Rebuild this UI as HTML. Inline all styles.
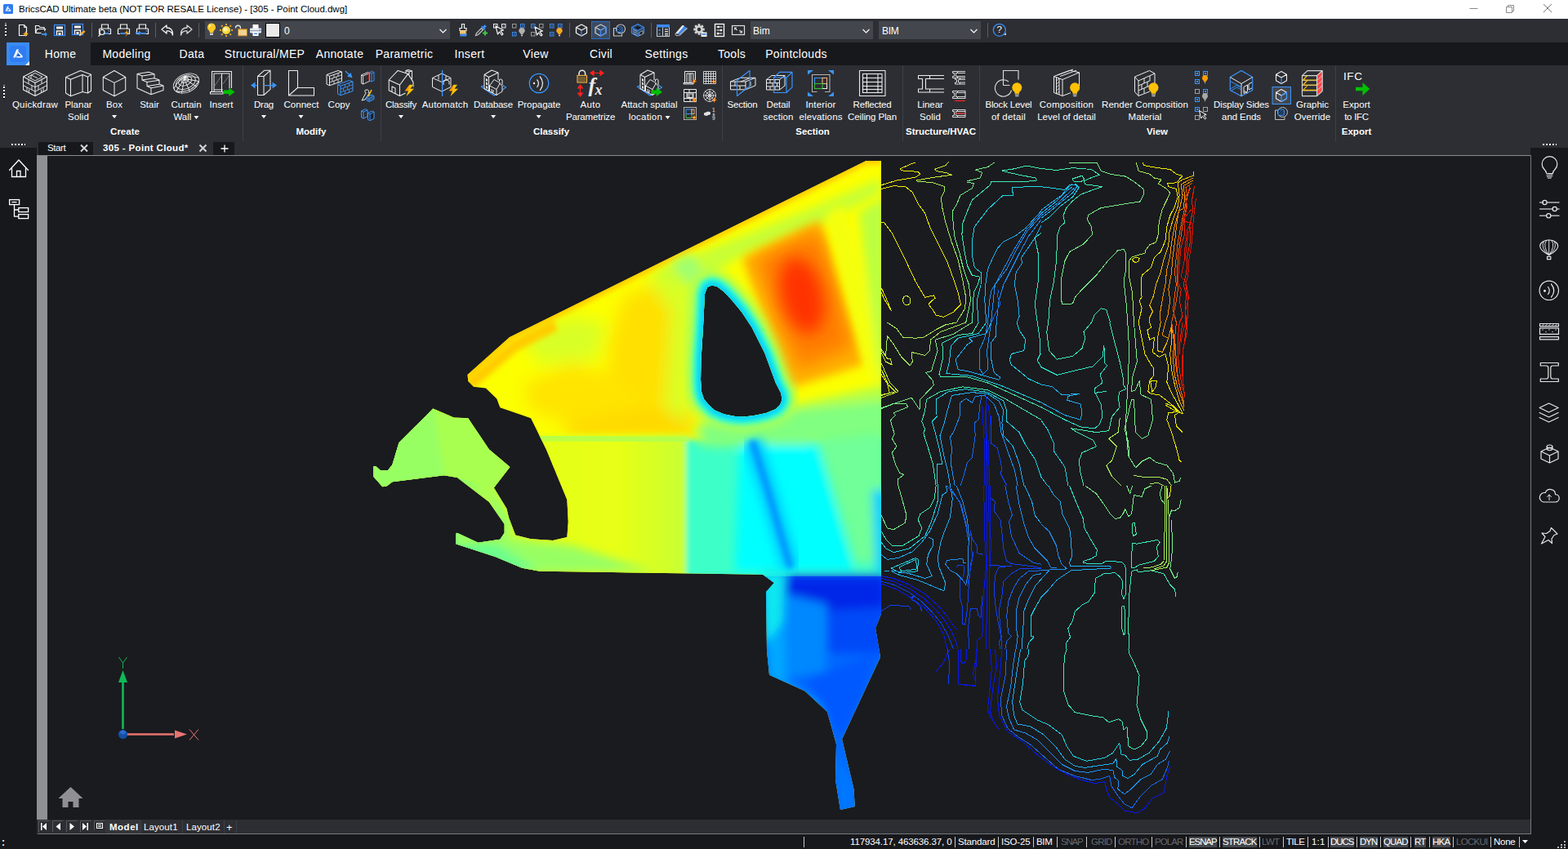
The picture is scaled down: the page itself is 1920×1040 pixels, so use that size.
<!DOCTYPE html>
<html lang="en"><head><meta charset="utf-8"><title>BricsCAD Ultimate beta - 305 - Point Cloud.dwg</title>
<style>
*{box-sizing:border-box;margin:0;padding:0}
html,body{width:1920px;height:1040px;overflow:hidden;background:#2c2e33;font-family:"Liberation Sans",sans-serif;color:#fff}
.abs{position:absolute}
#title{position:absolute;left:0;top:0;width:1920px;height:23px;background:#fff;color:#000;font-size:12px}
#title .t{position:absolute;left:23px;top:5px;white-space:nowrap;font-size:11.5px;letter-spacing:-0.03px}
#toolbar{position:absolute;left:0;top:23px;width:1920px;height:29px;background:#2c2e33}
#tabs{position:absolute;left:0;top:52px;width:1920px;height:28px;background:#2c2e33}
#tabs .dark{position:absolute;left:111px;top:0;width:1809px;height:28px;background:#17181c}
#tabs .tab{position:absolute;top:0;height:28px;line-height:29px;font-size:14px;letter-spacing:0.3px;color:#fff;white-space:nowrap;transform:translateX(-50%)}
#ribbon{position:absolute;left:0;top:80px;width:1920px;height:94px;background:#2c2e33}
.rl{position:absolute;font-size:11.5px;line-height:15px;color:#fff;text-align:center;white-space:nowrap;transform:translateX(-50%)}
.gl{position:absolute;top:75px;font-size:11.5px;font-weight:bold;color:#fff;white-space:nowrap;transform:translateX(-50%)}
.sep{position:absolute;top:0;width:1px;height:93px;background:#3d4046}
.dd{display:inline-block;width:0;height:0;border-left:3.7px solid transparent;border-right:3.7px solid transparent;border-top:4px solid #fff;vertical-align:middle}
svg{position:absolute;overflow:visible}
#doctabs{position:absolute;left:0;top:174px;width:1920px;height:16px;background:#2c2e33}
#left{position:absolute;left:0;top:181px;width:45px;height:841px;background:#17181c}
#right{position:absolute;left:1874px;top:181px;width:46px;height:841px;background:#17181c}
#vp{position:absolute;left:45px;top:190px;width:1829px;height:814px;background:#1a1b1f;border-top:1px solid #8a8a8e;border-left:1px solid #8a8a8e}
#layouts{position:absolute;left:46px;top:1003px;width:1828px;height:20px;background:#2c2e33}
#status{position:absolute;left:0;top:1022px;width:1920px;height:18px;background:#17181c;font-size:11.5px}

</style></head>
<body>
<div id="title">
<svg style="left:4px;top:5px" width="12" height="12" viewBox="4 4 20 20"><rect x="4" y="4" width="20" height="20" rx="2.500" fill="#2f7df2"/><path d="M12.300 8.500h2.700L10.900 18.600H8.200z" fill="#fff"/><path d="M14 10.800l5.800 6-0.600 1.800H12z" fill="#fff"/><path d="M14.200 13.600l2.800 3.200h-4.100z" fill="#1d63c4"/></svg>
<span class="t">BricsCAD Ultimate beta (NOT FOR RESALE License) - [305 - Point Cloud.dwg]</span>
<svg style="left:1790px;top:0" width="130" height="23" viewBox="0 0 130 23"><g stroke="#8a8a8a" stroke-width="1" fill="none"><path d="M9.5 10.5h10"/><path d="M54.5 8.5h7v7h-7z"/><path d="M56.5 8.5v-2h7v7h-2"/><path d="M100 5l10 10M110 5l-10 10" stroke="#777"/></g></svg>
</div>

<div id="toolbar">
<svg style="left:0;top:0" width="1920" height="29" viewBox="0 0 1920 29">
<g fill="#fff"><rect x="6" y="5" width="2" height="1" fill="#aaa"/><rect x="6" y="7" width="2" height="2"/><rect x="6" y="9" width="2" height="1" fill="#000"/><rect x="6" y="11" width="2" height="2"/><rect x="6" y="13" width="2" height="1" fill="#000"/><rect x="6" y="15" width="2" height="2"/><rect x="6" y="17" width="2" height="1" fill="#000"/><rect x="6" y="19" width="2" height="2"/><rect x="6" y="21" width="2" height="1" fill="#000"/></g>
<g transform="translate(20 6)"><path d="M3.500 1.500h6l3 3v10h-9z" fill="none" stroke="#f2f2f2" stroke-width="1.200"/><path d="M9.500 1.500v3h3" fill="none" stroke="#f2f2f2" stroke-width="1"/><path d="M11.500 9l1.200 2.300 2.300 1.200-2.300 1.200-1.200 2.300-1.200-2.300-2.300-1.200 2.300-1.200z" fill="#f5a623"/></g>
<g transform="translate(42 6)"><path d="M1.500 11.500v-9h4l1.500 2h5v2" fill="none" stroke="#f2f2f2" stroke-width="1.200"/><path d="M1.500 11.500l2-5h10l-1 2.500" fill="none" stroke="#f2f2f2" stroke-width="1.200"/><path d="M1.500 11.500h7" stroke="#f2f2f2" stroke-width="1.200"/><path d="M9 12h4v-2l3 3-3 3v-2H9z" fill="#3a8bf5"/></g>
<g transform="translate(65 6)"><rect x="1.500" y="1.500" width="13" height="13" fill="none" stroke="#3a8bf5" stroke-width="1.300"/><rect x="4" y="3.500" width="8" height="3" fill="#f2f2f2"/><path d="M4.500 14v-5h7v5" fill="none" stroke="#f2f2f2" stroke-width="1.400"/><rect x="6.500" y="11" width="3" height="3" fill="#f2f2f2"/></g>
<g transform="translate(87 5)"><rect x="1.500" y="1.500" width="13" height="13" fill="none" stroke="#3a8bf5" stroke-width="1.300"/><rect x="4" y="3.500" width="8" height="3" fill="#f2f2f2"/><path d="M4.500 14v-5h7v5" fill="none" stroke="#f2f2f2" stroke-width="1.400"/><rect x="6.500" y="11" width="3" height="3" fill="#f2f2f2"/><path d="M10 16l1-3 5-4 1.500 2-5 4z" fill="#f5a623"/><path d="M10 16l1-3 1.500 2z" fill="#fff"/></g>
<g transform="translate(120 6)"><path d="M4.500 6.500v-5.500h8v5.500" fill="none" stroke="#f2f2f2" stroke-width="1.200"/><path d="M4 12.500H1.500v-5.500q0-1 1-1h12q1 0 1 1v5.500H13" fill="none" stroke="#f2f2f2" stroke-width="1.200"/><rect x="7" y="11" width="6" height="2" fill="#3a8bf5"/><circle cx="5" cy="10.500" r="3" fill="#2c2e33" stroke="#f2f2f2" stroke-width="1.200"/><path d="M3 13l-2.500 2.500" stroke="#f2f2f2" stroke-width="1.200"/><rect x="12.500" y="8" width="1.500" height="1.500" fill="#3a8bf5"/></g>
<g transform="translate(143 6)"><path d="M4.500 6.500v-5.500h8v5.500" fill="none" stroke="#f2f2f2" stroke-width="1.200"/><path d="M4 12.500H1.500v-5.500q0-1 1-1h12q1 0 1 1v5.500H13" fill="none" stroke="#f2f2f2" stroke-width="1.200"/><rect x="4.500" y="11" width="6" height="2" fill="#3a8bf5"/><path d="M13 7.500l-3.500 4.500h2.500l-1.500 4 4.500-5.500h-2.500z" fill="#f5a623"/></g>
<g transform="translate(166 6)"><path d="M4.500 6.500v-5.500h8v5.500" fill="none" stroke="#f2f2f2" stroke-width="1.200"/><path d="M4 12.500H1.500v-5.500q0-1 1-1h12q1 0 1 1v5.500H13" fill="none" stroke="#f2f2f2" stroke-width="1.200"/><rect x="7" y="11" width="6" height="2" fill="#3a8bf5"/><path d="M0 10.500h4v-2l3.500 3-3.500 3v-2H0z" fill="#3a8bf5"/><rect x="12.500" y="8" width="1.500" height="1.500" fill="#3a8bf5"/></g>
<g transform="translate(197 6)"><path d="M1 7l6-5v3q8 0 7.500 9-1.500-5.500-7.500-5v3z" fill="none" stroke="#f2f2f2" stroke-width="1.300" stroke-linejoin="round"/></g>
<g transform="translate(220 6)"><path d="M15 7l-6-5v3q-8 0-7.500 9 1.500-5.500 7.500-5v3z" fill="none" stroke="#d8d8d8" stroke-width="1.300" stroke-linejoin="round"/></g>
<rect x="112" y="5" width="1" height="18" fill="#5a5d63"/>
<rect x="190" y="5" width="1" height="18" fill="#5a5d63"/>
<rect x="243" y="5" width="1" height="18" fill="#5a5d63"/>
<rect x="697" y="5" width="1" height="18" fill="#5a5d63"/>
<rect x="797" y="5" width="1" height="18" fill="#5a5d63"/>
<rect x="1209" y="5" width="1" height="18" fill="#5a5d63"/>
<rect x="251" y="3" width="300" height="22" fill="#43464c"/>
<g transform="translate(251 5)"><path d="M8 0.500a5 5 0 0 1 3 9q-0.800 0.800-0.800 2.500h-4.400q0-1.700-0.800-2.500a5 5 0 0 1 3-9z" fill="#ffc928"/><path d="M7 2.500a2.500 2.500 0 0 0-1.500 3" stroke="#fff" stroke-width="1.200" fill="none"/><rect x="6" y="12.500" width="4" height="2.500" fill="#c8c8c8"/></g>
<g transform="translate(269 6)"><circle cx="8" cy="8" r="5" fill="#ffdc3c"/><circle cx="7" cy="7" r="2.500" fill="#fff2a0"/><g fill="#f5a623"><rect x="7" y="0" width="2" height="2"/><rect x="7" y="14" width="2" height="2"/><rect x="0" y="7" width="2" height="2"/><rect x="14" y="7" width="2" height="2"/><rect x="1.800" y="1.800" width="2" height="2"/><rect x="12.200" y="1.800" width="2" height="2"/><rect x="1.800" y="12.200" width="2" height="2"/><rect x="12.200" y="12.200" width="2" height="2"/></g></g>
<g transform="translate(287 6)"><path d="M1.500 5.500a3 3 0 0 1 6-0.500v2" fill="none" stroke="#e0e0e0" stroke-width="1.300"/><rect x="4.500" y="6.500" width="11" height="8.500" fill="#e8b860" stroke="#b07820" stroke-width="0.800"/><path d="M5 9h10M5 11h10M5 13h10" stroke="#fff4d8" stroke-width="0.900"/></g>
<g transform="translate(305 6)"><rect x="4.500" y="1" width="7" height="5" fill="#fff"/><rect x="1" y="5.500" width="14" height="6" rx="1" fill="#e4e8ee"/><rect x="1" y="8" width="14" height="1.200" fill="#9aa4b4"/><rect x="4.500" y="10" width="7" height="5" fill="#fff"/><rect x="6" y="11.500" width="4" height="1.500" fill="#3a8bf5"/><rect x="12.500" y="7" width="1.500" height="1.500" fill="#3a8bf5"/></g>
<rect x="325.500" y="5.500" width="17" height="17" fill="#e9e9e9" stroke="#000" stroke-width="1"/>
<path d="M538.5 13l4 4 4-4" fill="none" stroke="#fff" stroke-width="1.100"/>
<g transform="translate(559 6)"><path d="M6.500 0.500h3v5h2.500v3h-8v-3h2.500z" fill="none" stroke="#f2f2f2" stroke-width="1.200"/><path d="M4 8.500h8v4.500h-8z" fill="#f5a623"/><path d="M5.500 9v3M7.500 9v3M9.500 9v3" stroke="#fff" stroke-width="0.700"/><path d="M-1 15.500h5l1-3h8l-1 3z" fill="#3a8bf5"/></g>
<g transform="translate(581 6)"><path d="M1.500 14.500l1-3 6-6 2 2-6 6z" fill="none" stroke="#c8c8c8" stroke-width="1.200"/><path d="M8 4l1.500-1.500 1 1 2-2.500 2.500 2.500-2.500 2 1 1L12 8z" fill="#3a8bf5"/><path d="M10 11.500h6M13 8.500v6" stroke="#3fc83f" stroke-width="2"/></g>
<g transform="translate(604 6)"><rect x="0.5" y="0.5" width="4.500" height="4.500" fill="none" stroke="#f2f2f2" stroke-width="1"/><rect x="2.0" y="2.0" width="1.500" height="1.500" fill="#3a8bf5"/><rect x="10.5" y="0.5" width="4.500" height="4.500" fill="none" stroke="#f2f2f2" stroke-width="1"/><rect x="12.0" y="2.0" width="1.500" height="1.500" fill="#3a8bf5"/><path d="M3 3l2.500 10 2-3 3 4 1.500-1.200-3-4 3.500-0.800z" fill="#2c2e33" stroke="#fff" stroke-width="1.100" stroke-linejoin="round"/></g>
<g transform="translate(627 6)"><rect x="0.5" y="0.5" width="4.500" height="4.500" fill="none" stroke="#9a9a9a" stroke-width="1"/><rect x="10.5" y="0.5" width="4.500" height="4.500" fill="none" stroke="#3a8bf5" stroke-width="1"/><rect x="12.0" y="2.0" width="1.500" height="1.500" fill="#3a8bf5"/><rect x="0.5" y="10.5" width="4.500" height="4.500" fill="none" stroke="#3a8bf5" stroke-width="1"/><rect x="2.0" y="12.0" width="1.500" height="1.500" fill="#3a8bf5"/><path d="M12 5a3.500 3.500 0 0 1 2 6.500q-0.500 0.500-0.500 1.500h-3q0-1-0.500-1.500a3.500 3.500 0 0 1 2-6.500z" fill="#b0b0b0"/><rect x="11" y="13.5" width="2" height="1.800" fill="#c8c8c8"/></g>
<g transform="translate(650 6)"><rect x="0.5" y="0.5" width="4.500" height="4.500" fill="none" stroke="#3a8bf5" stroke-width="1"/><rect x="2.0" y="2.0" width="1.500" height="1.500" fill="#3a8bf5"/><rect x="10.5" y="0.5" width="4.500" height="4.500" fill="none" stroke="#9a9a9a" stroke-width="1"/><rect x="0.5" y="10.5" width="4.500" height="4.500" fill="none" stroke="#9a9a9a" stroke-width="1"/><path d="M5 4l2.500 10 2-3 3 4 1.500-1.200-3-4 3.500-0.800z" fill="#2c2e33" stroke="#fff" stroke-width="1.100" stroke-linejoin="round"/></g>
<g transform="translate(673 6)"><rect x="0.5" y="0.5" width="4.500" height="4.500" fill="none" stroke="#3a8bf5" stroke-width="1"/><rect x="2.0" y="2.0" width="1.500" height="1.500" fill="#3a8bf5"/><rect x="10.5" y="0.5" width="4.500" height="4.500" fill="none" stroke="#3a8bf5" stroke-width="1"/><rect x="12.0" y="2.0" width="1.500" height="1.500" fill="#3a8bf5"/><rect x="0.5" y="10.5" width="4.500" height="4.500" fill="none" stroke="#3a8bf5" stroke-width="1"/><rect x="2.0" y="12.0" width="1.500" height="1.500" fill="#3a8bf5"/><path d="M12 5a3.500 3.500 0 0 1 2 6.500q-0.500 0.500-0.500 1.500h-3q0-1-0.500-1.500a3.500 3.500 0 0 1 2-6.500z" fill="#f5a623"/><rect x="11" y="13.5" width="2" height="1.800" fill="#c8c8c8"/></g>
<g transform="translate(704 6)"><path d="M8 1l6.500 3.500v7L8 15 1.500 11.500v-7z" fill="none" stroke="#f2f2f2" stroke-width="1.300" stroke-linejoin="round"/><path d="M1.500 4.500L8 8l6.500-3.500" fill="none" stroke="#f2f2f2" stroke-width="1.300" stroke-linejoin="round"/><path d="M8 8v7" stroke="#3a8bf5" stroke-width="1.300"/></g>
<rect x="724.500" y="3.500" width="22" height="21" fill="#3a4a60" stroke="#2f6ec8" stroke-width="1"/>
<g transform="translate(727.5 6)"><path d="M8 1l6.500 3.500v7L8 15 1.500 11.500v-7z" fill="none" stroke="#c8c8c8" stroke-width="1.300" stroke-linejoin="round"/><path d="M1.500 4.500L8 8l6.500-3.500" fill="none" stroke="#c8c8c8" stroke-width="1.300"/><path d="M8 8v7l6.500-3.500v-7z" fill="none" stroke="#3a8bf5" stroke-width="1.300" stroke-linejoin="round"/></g>
<g transform="translate(750 6)"><path d="M4 5.500H1.500v9.500h10v-2" fill="none" stroke="#c8c8c8" stroke-width="1.200"/><circle cx="10" cy="6.500" r="5.500" fill="none" stroke="#c8c8c8" stroke-width="1.100"/><rect x="5.500" y="4" width="6.500" height="6.500" rx="1.500" fill="#18191c" stroke="#3a8bf5" stroke-width="1"/><path d="M6.500 8l3.500-3.500M7 10l4.500-4.500M9 10.500l3-3" stroke="#3a8bf5" stroke-width="0.900"/></g>
<g transform="translate(773 6)"><path d="M8 0.500l7.500 4v7L8 15.500 0.500 11.500v-7z" fill="#2a4468" stroke="#3a8bf5" stroke-width="1.100" stroke-linejoin="round"/><path d="M0.500 4.500L8 8.500l7.500-4M8 8.500v7" fill="none" stroke="#3a8bf5" stroke-width="1"/><path d="M2 7l5 2.500M2 9.500l5 2.500M2 12l5 2.500" stroke="#c8c8c8" stroke-width="0.800"/><path d="M10 10.500l4-2v4l-4 2z" fill="#18191c" stroke="#c8c8c8" stroke-width="0.700"/><path d="M8 3l4 2-4 2-4-2z" fill="#18191c"/></g>
<g transform="translate(804 6)"><rect x="0.500" y="1.500" width="15" height="14" fill="none" stroke="#c8c8c8" stroke-width="1"/><rect x="0" y="1" width="16" height="3.500" fill="#3a8bf5"/><path d="M7.500 4.500v11" stroke="#c8c8c8" stroke-width="1"/><rect x="2.500" y="7" width="2" height="2" fill="#3a8bf5"/><rect x="2.500" y="11.500" width="2" height="2" fill="#3a8bf5"/><path d="M10 7h4M10 9.500h4M10 12h4M10 14h4" stroke="#fff" stroke-width="1"/></g>
<g transform="translate(826 6)"><path d="M1 12l8-9.500q2-1 3 0.500l-8 9.500z" fill="#e8e8e8"/><path d="M4 12.500l8-9.500 3.500 2.500-9 8.500z" fill="#3a8bf5"/><path d="M1 12q0 3 3 2.500l2.500-0.500 9-8.500" fill="none" stroke="#b0b0b0" stroke-width="1.200"/></g>
<g transform="translate(849 6)"><g transform="translate(7 7)" fill="#d0d0d0"><rect x="-1.400" y="-6.800" width="2.800" height="3.200" transform="rotate(0)" /><rect x="-1.400" y="-6.800" width="2.800" height="3.200" transform="rotate(45)" /><rect x="-1.400" y="-6.800" width="2.800" height="3.200" transform="rotate(90)" /><rect x="-1.400" y="-6.800" width="2.800" height="3.200" transform="rotate(135)" /><rect x="-1.400" y="-6.800" width="2.800" height="3.200" transform="rotate(180)" /><rect x="-1.400" y="-6.800" width="2.800" height="3.200" transform="rotate(225)" /><rect x="-1.400" y="-6.800" width="2.800" height="3.200" transform="rotate(270)" /><rect x="-1.400" y="-6.800" width="2.800" height="3.200" transform="rotate(315)" /><circle r="4.800"/></g><circle cx="7" cy="7" r="2.200" fill="#2c2e33"/><rect x="9.500" y="10.500" width="7" height="5.500" fill="#f0f0f0"/><rect x="10.500" y="12" width="5" height="1.800" fill="#3a8bf5"/></g>
<g transform="translate(873 6)"><rect x="2.500" y="0.500" width="11" height="15" fill="none" stroke="#fff" stroke-width="1.300"/><path d="M4.500 4h7M4.500 8h7M4.500 12h7" stroke="#fff" stroke-width="1"/><rect x="5.500" y="2.800" width="2" height="2.400" fill="#fff"/><rect x="9" y="6.800" width="2" height="2.400" fill="#fff"/><rect x="5" y="10.800" width="2" height="2.400" fill="#fff"/></g>
<g transform="translate(896 6)"><rect x="0.500" y="2.500" width="15" height="11" fill="none" stroke="#e0e0e0" stroke-width="1.200"/><path d="M3 4.500h3.500l-1.200 1.200 1.700 1.700-1 1-1.700-1.700L3 8z" fill="#d0d0d0"/><path d="M13 11.500h-3.500l1.200-1.200-1.700-1.700 1-1 1.700 1.700L13 8z" fill="#d0d0d0"/></g>
<rect x="919" y="3" width="150" height="22" fill="#43464c"/>
<path d="M1056.5 13l4 4 4-4" fill="none" stroke="#fff" stroke-width="1.100"/>
<rect x="1076" y="3" width="125" height="22" fill="#43464c"/>
<path d="M1188.5 13l4 4 4-4" fill="none" stroke="#fff" stroke-width="1.100"/>
<circle cx="1223.800" cy="13.800" r="7.500" fill="none" stroke="#3a8bf5" stroke-width="1.300"/><path d="M1232 17v3h-3z" fill="#d0d0d0"/>
</svg>
<div class="abs" style="left:348px;top:8px;font-size:12px;color:#fff">0</div>
<div class="abs" style="left:922px;top:8px;font-size:12px;color:#fff">Bim</div>
<div class="abs" style="left:1080px;top:8px;font-size:12px;color:#fff;letter-spacing:-0.3px">BIM</div>
<div class="abs" style="left:1220.500px;top:7px;font-size:11.500px;color:#fff">?</div>
</div>

<div id="tabs"><div class="dark"></div>
<div class="abs" style="left:8px;top:0;width:28px;height:28px;background:#3a8bf5"></div>
<svg style="left:8px;top:0" width="28" height="28" viewBox="0 0 28 28"><rect x="4" y="4" width="20" height="20" rx="3.500" fill="#2f7df2"/><path d="M12.300 8.500h2.700L10.900 18.600H8.200z" fill="#fff"/><path d="M14 10.800l5.800 6-0.600 1.800H12z" fill="#fff"/><path d="M14 12.800l3.600 4.100h-5z" fill="#1d63c4"/><path d="M28 23v5h-5z" fill="#fff"/></svg>
<div class="tab" style="left:74px">Home</div>
<div class="tab" style="left:155px">Modeling</div>
<div class="tab" style="left:235px">Data</div>
<div class="tab" style="left:324px">Structural/MEP</div>
<div class="tab" style="left:416px">Annotate</div>
<div class="tab" style="left:495px">Parametric</div>
<div class="tab" style="left:575px">Insert</div>
<div class="tab" style="left:656px">View</div>
<div class="tab" style="left:736px">Civil</div>
<div class="tab" style="left:816px">Settings</div>
<div class="tab" style="left:896px">Tools</div>
<div class="tab" style="left:975px">Pointclouds</div>
</div>
<div id="ribbon">
<div class="rl" style="left:43px;top:41px"><span style="letter-spacing:0.19px">Quickdraw</span></div>
<div class="rl" style="left:96px;top:41px">Planar<br><span style="letter-spacing:0.07px">Solid</span></div>
<div class="rl" style="left:140px;top:41px">Box<br><span class="dd" style="position:relative;top:-1px"></span></div>
<div class="rl" style="left:183px;top:41px">Stair</div>
<div class="rl" style="left:228px;top:41px">Curtain<br>Wall <span class="dd"></span></div>
<div class="rl" style="left:271px;top:41px">Insert</div>
<div class="rl" style="left:323px;top:41px"><span style="letter-spacing:-0.23px">Drag</span><br><span class="dd" style="position:relative;top:-1px"></span></div>
<div class="rl" style="left:369px;top:41px"><span style="letter-spacing:0.02px">Connect</span><br><span class="dd" style="position:relative;top:-1px"></span></div>
<div class="rl" style="left:415px;top:41px">Copy</div>
<div class="rl" style="left:491px;top:41px"><span style="letter-spacing:-0.28px">Classify</span><br><span class="dd" style="position:relative;top:-1px"></span></div>
<div class="rl" style="left:545px;top:41px"><span style="letter-spacing:0.18px">Automatch</span></div>
<div class="rl" style="left:604px;top:41px"><span style="letter-spacing:-0.18px">Database</span><br><span class="dd" style="position:relative;top:-1px"></span></div>
<div class="rl" style="left:660px;top:41px"><span style="letter-spacing:-0.04px">Propagate</span><br><span class="dd" style="position:relative;top:-1px"></span></div>
<div class="rl" style="left:723px;top:41px"><span style="letter-spacing:0.29px">Auto</span><br><span style="letter-spacing:-0.16px">Parametrize</span></div>
<div class="rl" style="left:795px;top:41px"><span style="letter-spacing:-0.00px">Attach spatial</span><br><span style="letter-spacing:0.20px">location</span> <span class="dd"></span></div>
<div class="rl" style="left:909px;top:41px"><span style="letter-spacing:-0.19px">Section</span></div>
<div class="rl" style="left:953px;top:41px"><span style="letter-spacing:-0.03px">Detail</span><br><span style="letter-spacing:0.05px">section</span></div>
<div class="rl" style="left:1005px;top:41px"><span style="letter-spacing:0.18px">Interior</span><br><span style="letter-spacing:0.13px">elevations</span></div>
<div class="rl" style="left:1068px;top:41px"><span style="letter-spacing:-0.19px">Reflected</span><br><span style="letter-spacing:-0.13px">Ceiling Plan</span></div>
<div class="rl" style="left:1139px;top:41px"><span style="letter-spacing:-0.06px">Linear</span><br><span style="letter-spacing:0.07px">Solid</span></div>
<div class="rl" style="left:1235px;top:41px"><span style="letter-spacing:-0.16px">Block Level</span><br><span style="letter-spacing:0.19px">of detail</span></div>
<div class="rl" style="left:1306px;top:41px"><span style="letter-spacing:0.23px">Composition</span><br><span style="letter-spacing:0.05px">Level of detail</span></div>
<div class="rl" style="left:1402px;top:41px"><span style="letter-spacing:0.06px">Render Composition</span><br><span style="letter-spacing:-0.02px">Material</span></div>
<div class="rl" style="left:1520px;top:41px"><span style="letter-spacing:-0.14px">Display Sides</span><br><span style="letter-spacing:-0.10px">and Ends</span></div>
<div class="rl" style="left:1607px;top:41px"><span style="letter-spacing:-0.07px">Graphic</span><br><span style="letter-spacing:0.03px">Override</span></div>
<div class="rl" style="left:1661px;top:41px"><span style="letter-spacing:0.06px">Export</span><br><span style="letter-spacing:-0.28px">to IFC</span></div>
<div class="gl" style="left:153px">Create</div>
<div class="gl" style="left:381px">Modify</div>
<div class="gl" style="left:675px">Classify</div>
<div class="gl" style="left:995px">Section</div>
<div class="gl" style="left:1152px">Structure/HVAC</div>
<div class="gl" style="left:1417px">View</div>
<div class="gl" style="left:1661px">Export</div>
<div class="sep" style="left:297px"></div>
<div class="sep" style="left:466px"></div>
<div class="sep" style="left:884px"></div>
<div class="sep" style="left:1105px"></div>
<div class="sep" style="left:1199px"></div>
<div class="sep" style="left:1635px"></div>
<svg style="left:0;top:0" width="1920" height="94" viewBox="0 80 1920 94">
<path d="M43 86.500L57.500 94v16L43 117.500 28.500 110V94zM28.500 94L43 101.500 57.500 94M43 101.500v16" fill="none" stroke="#ececec" stroke-width="1.050" stroke-linejoin="round"/>
<path d="M43 89.500l9 4.700-9 4.700-9-4.700zM38 91.800v4.500M38 91.800l8 4" fill="none" stroke="#ececec" stroke-width="0.900"/>
<path d="M28.500 99.300L43 106.800l14.500-7.500M28.500 104.600L43 112.100l14.500-7.500M35 97.500v5.300M39 104.700v5.300M33 107v5.300M51 97.500v5.300M47 104.700v5.300M53 107v5.300M35.500 113.500v-4M50.500 113.500v-4" fill="none" stroke="#ececec" stroke-width="0.900"/>
<path d="M80.500 94.500L98.500 86.500l13 4.700-4 3.100-6.500-2.800-14.500 5.800zM80.500 94.500V114l6 3.700V97.300M86.500 117.700L101 112.500V91.500M101 112.600l6.500 1.400V94.300M107.500 114l4-2.800v-20" fill="none" stroke="#ececec" stroke-width="1.050" stroke-linejoin="round"/>
<path d="M140 86.500l13.700 8v16L140 117.700l-13.700-7.200v-16zM126.300 94.500L140 101.400l13.700-6.900M140 101.400v16.300" fill="none" stroke="#ececec" stroke-width="1.050" stroke-linejoin="round"/>
<path d="M168 90.500l14-2.200 7 2.500v5l6 2.300v5l5 2v5.500l-15 5.200L168 108zM168 90.500l6 2.500 15-2.200M174 93v5l15-2.200M174 98l6 2.500 15-2.200M180 100.500v5l15-2.300M180 105.500l5 2.200 15-2.600M185 107.700v8.100M174 98v0" fill="none" stroke="#ececec" stroke-width="1.050" stroke-linejoin="round"/>
<g transform="rotate(-24 228 102)" fill="none" stroke="#ececec" stroke-width="0.900"><ellipse cx="228" cy="102" rx="16.500" ry="11"/><ellipse cx="228" cy="100.500" rx="12.500" ry="8"/><ellipse cx="228" cy="99" rx="8.500" ry="5.300"/><ellipse cx="228" cy="98" rx="4.500" ry="2.800"/><path d="M211.500 102q16-14 33 0M228 95.500v17.500M228 96l-10 15M228 96l10 15M228 96l-15 10M228 96l15 10M213 106q15 10 30 0"/></g><circle cx="226.500" cy="94.500" r="1.500" fill="#fff"/>
<path d="M259.500 112V87.500h24V108M262 112V90h19v18M271.500 90v22M262 110h11M257.500 112.500h15.500v2.500h-15.500z" fill="none" stroke="#ececec" stroke-width="1.050" stroke-linejoin="round"/>
<path d="M263 105l8-12M273 103l7-10" fill="none" stroke="#8a8a8a" stroke-width="0.800"/>
<path d="M273.800 110.500h6.500v-3l7.200 5.300-7.200 5.300v-3h-6.500z" fill="#00c000"/>
<path d="M315.500 93.500h7.500v23h-7.500zM315.500 93.500l8-7.200h7.500v23l-8 7.200M323 93.500l8-7.200" fill="none" stroke="#ececec" stroke-width="1.050" stroke-linejoin="round"/>
<path d="M307 104.600l5.500-4v8zM339 104.600l-5.500-4v8z" fill="#3a96ff"/><path d="M312 104.600h3.500M324 104.600h10" stroke="#3a96ff" stroke-width="1.300"/>
<path d="M353.500 86.500h11v21h20v9.500h-31zM353.500 117l11-9.500" fill="none" stroke="#ececec" stroke-width="1.050" stroke-linejoin="round"/>
<path d="M400 91.5l3.500 1.800v11.500l-3.500-1.800zM400 91.5l14-5 4.500 1.500-15 5.300M403.5 104.8l15-5.300V88.0" fill="none" stroke="#ececec" stroke-width="1" stroke-linejoin="round"/><path d="M403.5 97.0l15-5.300M403.5 101.0l15-5.300M409 91.5v3.800M414 89.7v3.800M407 96.0v3.800M412 94.2v3.800M409 99.2v3.800M414 97.5v3.800" fill="none" stroke="#ececec" stroke-width="0.800"/>
<path d="M413.5 103.5l3.500 1.800v11.500l-3.500-1.800zM413.5 103.5l14-5 4.500 1.500-15 5.300M417.0 116.8l15-5.300V100.0" fill="none" stroke="#3a96ff" stroke-width="1" stroke-linejoin="round"/><path d="M417.0 109.0l15-5.300M417.0 113.0l15-5.300M422.5 103.5v3.800M427.5 101.7v3.800M420.5 108.0v3.800M425.5 106.2v3.800M422.5 111.2v3.800M427.5 109.5v3.800" fill="none" stroke="#3a96ff" stroke-width="0.800"/>
<path d="M423 87l5 5" stroke="#3a96ff" stroke-width="1.200"/><path d="M431.500 95.500l-6.500-2 4.500-4.500z" fill="#3a96ff"/>
<path d="M442.500 92l8-3.500 2 1v10l-8 3.500-2-1zM442.500 92l2 1v10M444.500 93l8-3.500" fill="none" stroke="#ececec" stroke-width="0.900"/>
<path d="M452.500 88.500l3-1.200 2.500 1.200v10l-3 1.500-2.500-1.200M458 88.500l-3 1.500v10M455 90l-2.500-1.300" fill="none" stroke="#3a96ff" stroke-width="0.900"/>
<path d="M452 88v11" stroke="#ff2020" stroke-width="1.200"/>
<path d="M443 123l5-9q-3-4 1-4t2 4M443 123l4-1 6-9" fill="none" stroke="#ececec" stroke-width="1"/>
<path d="M449 119l6-3 3 1.500v4l-6 3-3-1.500zM449 119l3 1.500 6-3M452 120.500v4" fill="#3a96ff" fill-opacity="0.350" stroke="#3a96ff" stroke-width="0.900"/>
<path d="M451 118l4-8" stroke="#ffc107" stroke-width="1.600"/>
<path d="M442.500 136l5-2.500 2.500 1.200v8l-5 2.500-2.500-1.200zM442.500 136l2.500 1.200v8M445 137.200l5-2.500" fill="none" stroke="#3a96ff" stroke-width="1"/>
<path d="M450.500 138.500l5-2.500 2.500 1.200v8l-5 2.500-2.500-1.200zM450.500 138.500l2.500 1.200v8M453 139.700l5-2.500" fill="#202124" stroke="#3a96ff" stroke-width="1"/>
<path d="M476.200 98l11-11.600 12.500 4 6.300 10.200v6M476.200 98v12.800l13.300 6.700V104zM489.500 104l10.200-13.600M489.500 117.500l7-3.500M476.200 98l13.300 6M480 112.500v-6.500l4 2v6.500M497 89.500v-3l3-1 4.500 1.500v10M497 86.500l4 1.500 3.500-1.300M501 88v3" fill="none" stroke="#ececec" stroke-width="1.050" stroke-linejoin="round"/>
<path d="M501.5 103.7l-5.500 7.500h4l-2.500 6.700 9.500-9.200h-4.500l3.500-5z" fill="#ffc107"/><path d="M501.5 103.7l-5.500 7.500h4z" fill="#ff9800"/>
<path d="M529.500 95.500l11.500-5.500 11 5.500v11l-11 5.500-11.500-5.500zM529.500 95.500l11.500 5 11-5M537 92v5.500M546 93v4.500l-3 1.500v5M546 97.500l4 2v4" fill="none" stroke="#ececec" stroke-width="1"/>
<path d="M541.600 86v32" stroke="#3a96ff" stroke-width="1.300"/>
<path d="M555.5 103.7l-5.500 7.500h4l-2.500 6.700 9.500-9.200h-4.500l3.500-5z" fill="#ffc107"/><path d="M555.5 103.7l-5.500 7.500h4z" fill="#ff9800"/>
<path d="M589 106l4-1.200M589 106l16 11 14.500-10-4-2.500" fill="none" stroke="#3a96ff" stroke-width="1.100"/><path d="M593 91.5l9-5.500 8 3v9M593 91.5v17l5.500 3V94.5l-5.500-3M598.5 94.5l11.500-5.500" fill="none" stroke="#ececec" stroke-width="1.050" stroke-linejoin="round"/><path d="M595 96v3l2 1v-3zM595 100.5v3l2 1v-3zM595 105v3l2 1v-3z" fill="#ececec" stroke="none"/><path d="M599.5 105l5.500-7.500 5.500 3 4.500 5v6.500l-7 4.500-8.500-4.500zM608 117v-7.500l-8.500-4.500M608 109.5l4.500-8M602 109v3.500l2 1v-3.500M611.5 100v-2.500l2-0.500 1.500 1v6" fill="#2c2e33" stroke="#ececec" stroke-width="1" stroke-linejoin="round"/>
<circle cx="660" cy="102" r="11.700" fill="none" stroke="#3a96ff" stroke-width="1.300"/><circle cx="654" cy="102" r="1.200" fill="#ececec"/><path d="M657.500 97.500q4 4.500 0 9.500M661 93.500q7 8.500 0 17.500" fill="none" stroke="#ececec" stroke-width="1.200"/>
<path d="M709 93v-3a3.800 3.800 0 0 1 7.600 0v3" fill="none" stroke="#ececec" stroke-width="1.500"/><rect x="707" y="92.500" width="11.500" height="8.500" fill="none" stroke="#f0b040" stroke-width="1.200"/><path d="M708 95h9.500M708 97h9.500M708 99h9.500" stroke="#f0b040" stroke-width="0.700"/>
<path d="M723 89.500l4-2.800v5.600zM739 89.500l-4-2.800v5.600zM726 89.500h10" fill="#ff2020" stroke="#ff2020" stroke-width="1.200"/><path d="M710.500 104l-2.800 4h5.600zM710.500 118l-2.800-4h5.600zM710.500 107v8" fill="#ff2020" stroke="#ff2020" stroke-width="1.200"/>
<text x="720.500" y="113" font-family="Liberation Serif,serif" font-style="italic" font-size="26" font-weight="bold" fill="#ececec">f</text><text x="728.500" y="115.500" font-family="Liberation Serif,serif" font-style="italic" font-size="18" font-weight="bold" fill="#ececec">x</text>
<path d="M780 106l4-1.200M780 106l16 11 14.500-10-4-2.500" fill="none" stroke="#3a96ff" stroke-width="1.100"/><path d="M784 91.5l9-5.500 8 3v9M784 91.5v17l5.500 3V94.5l-5.500-3M789.5 94.5l11.500-5.500" fill="none" stroke="#ececec" stroke-width="1.050" stroke-linejoin="round"/><path d="M786 96v3l2 1v-3zM786 100.5v3l2 1v-3zM786 105v3l2 1v-3z" fill="#ececec" stroke="none"/><path d="M790.5 105l5.500-7.500 5.500 3 4.500 5v6.500l-7 4.500-8.500-4.500zM799 117v-7.500l-8.500-4.500M799 109.5l4.500-8M793 109v3.500l2 1v-3.500M802.5 100v-2.500l2-0.500 1.500 1v6" fill="#2c2e33" stroke="#ececec" stroke-width="1" stroke-linejoin="round"/>
<path d="M797.200 110.500h6.500v-3l7.300 5.300-7.300 5.300v-3h-6.500z" fill="#00c000"/>
<path d="M838.500 101V87.500h13V98M841 101V90h8v8M844 90v11M846 90v11M837 101.500h12v1.500h-12z" fill="none" stroke="#ececec" stroke-width="1"/><path d="M850 96.0l1 2.500 2.500 1-2.500 1-1 2.500-1-2.500-2.500-1 2.500-1z" fill="#ff7a18"/><circle cx="850" cy="99.5" r="1" fill="#ffd040"/>
<path d="M861.500 87.500h15v15h-15zM864.500 87.500v15M867.500 87.500v15M870.500 87.500v15M873.500 87.500v15M861.500 90.500h15M861.500 93.500h15M861.500 96.500h15M861.500 99.500h15" fill="none" stroke="#ececec" stroke-width="0.800"/><path d="M874 96.5l1 2.500 2.500 1-2.500 1-1 2.500-1-2.500-2.500-1 2.500-1z" fill="#ff7a18"/><circle cx="874" cy="100" r="1" fill="#ffd040"/>
<path d="M837.500 109.500h15v15h-15zM837.500 113.500h15M837.500 120.500h15M844 109.500v4M841 113.500v7M849 113.500v7M845 120.500v4M842 115h6v4.500h-6z" fill="none" stroke="#ececec" stroke-width="1"/><rect x="842.500" y="115.500" width="2.500" height="3.500" fill="#888"/><path d="M850 119.0l1 2.500 2.500 1-2.500 1-1 2.500-1-2.500-2.500-1 2.500-1z" fill="#ff7a18"/><circle cx="850" cy="122.5" r="1" fill="#ffd040"/>
<g fill="none" stroke="#ececec" stroke-width="0.800"><circle cx="869" cy="117" r="7.500"/><circle cx="869" cy="117" r="4.500"/><circle cx="869" cy="117" r="2"/><path d="M861 117h16M869 109v16M863.500 111.500l11 11M874.500 111.500l-11 11"/></g><path d="M874.5 119.0l1 2.500 2.500 1-2.500 1-1 2.500-1-2.500-2.500-1 2.500-1z" fill="#ff7a18"/><circle cx="874.5" cy="122.5" r="1" fill="#ffd040"/>
<rect x="837.500" y="131.500" width="15" height="15" fill="none" stroke="#b0b0b0" stroke-width="1"/><rect x="840" y="134" width="7" height="5.500" fill="none" stroke="#3a96ff" stroke-width="1"/><rect x="847" y="134" width="3" height="5.500" fill="none" stroke="#f0b080" stroke-width="1"/><path d="M840 139.500v5h7v-5" fill="none" stroke="#40c040" stroke-width="1"/><path d="M850 140.5l1 2.500 2.500 1-2.500 1-1 2.500-1-2.500-2.500-1 2.500-1z" fill="#ff7a18"/><circle cx="850" cy="144" r="1" fill="#ffd040"/>
<path d="M862 138.500l5-2 3 1v2.500l-5 2-3-1z" fill="#e0e0e0"/><text x="872" y="137" font-size="6.500" fill="#ececec" font-family="Liberation Sans,sans-serif">1</text><text x="872" y="147" font-size="6.500" fill="#ececec" font-family="Liberation Sans,sans-serif">9</text><path d="M874 138v3.500M872.500 140l1.500 1.500 1.500-1.500" stroke="#ececec" stroke-width="0.800" fill="none"/>
<path d="M894.500 100l12-4.700h18.500v9.500l-12 5h-18.500zM894.500 100h18.500l12-4.700M913 100v9.800M894.500 105h18.500M900 100v5M906 105v4.800M907 100l12-4.700M919 100v5.500" fill="none" stroke="#ececec" stroke-width="1"/>
<path d="M902.500 98.500l15.500-12v19l-15.500 12z" fill="none" stroke="#3a96ff" stroke-width="1.150" stroke-linejoin="round"/>
<path d="M938.500 97.500l6.500-5h16l-6.500 5zM938.500 97.500h16v12.500h-16zM954.500 110l6.500-5v-12.500M938.500 101.700h16M938.500 105.900h16M943 97.500v4.200M949 97.500v4.200M946 101.700v4.200M951.500 101.700v4.200M943 105.900v4.100M949 105.900v4.100" fill="none" stroke="#ececec" stroke-width="1"/>
<path d="M947.500 95h15.500v18.500h-15.500zM947.500 95l7-6.700h15.500v18.500l-7 6.700M963 95l7-6.700" fill="none" stroke="#3a96ff" stroke-width="1.150" stroke-linejoin="round"/>
<path d="M989 86h7l-7 5.500zM1021 86h-7l7 5.500zM989 118h7l-7-5.500zM1021 118h-7l7-5.500z" fill="#3a96ff"/>
<path d="M1000.500 112.500h-6v-21h21.500v21h-6" fill="none" stroke="#b0b0b0" stroke-width="1.100"/>
<path d="M997.500 102.500v-7h9.500" fill="none" stroke="#3a96ff" stroke-width="1.100"/><rect x="1007" y="95.500" width="5.500" height="7" fill="none" stroke="#f0b080" stroke-width="1.100"/><rect x="997.500" y="102.500" width="9.500" height="6" fill="none" stroke="#30c030" stroke-width="1.100"/><path d="M1007 108.500h5.500v-6" fill="none" stroke="#ececec" stroke-width="1.100"/>
<path d="M1052.500 86.500h31.500v31h-31.500zM1056.500 90.500h23.500v23h-23.500zM1061.500 90.500v23M1075 90.500v23M1056.500 95.500h23.500M1056.500 100.500h23.500M1056.500 105.500h23.500M1056.500 109.500h23.500" fill="none" stroke="#ececec" stroke-width="1.050" stroke-linejoin="round"/>
<path d="M1124.500 92.500h14v4h-5v12.500h5v4h-14v-4h5V96.500h-5zM1138.500 92.500h17.500M1138.500 96.500h17.500M1138.500 109h17.500M1138.500 113h17.500" fill="none" stroke="#ececec" stroke-width="1.050" stroke-linejoin="round"/>
<path d="M1166.500 87.500h6v2h-2v4h2v2h-6v-2h2v-4h-2zM1172.500 87.500h9.500M1172.500 89.500h9.500M1172.500 93.500h9.500M1169.500 95.500h6v2h-2v3.500h2v2h-6v-2h2v-3.500h-2zM1175.500 95.500h6.500M1175.500 97.500h6.500M1175.500 101h6.500M1175.500 103h6.500" fill="none" stroke="#ececec" stroke-width="0.900"/>
<path d="M1166.500 111.500h6v2h-2v5h2v2h-6v-2h2v-5h-2zM1172.500 111.500h9.500M1172.500 113.500h9.500M1172.500 118.500h9.500M1172.500 120.500h9.500M1182 111.500v9" fill="none" stroke="#ececec" stroke-width="0.900"/><path d="M1169 123.500h13" stroke="#ff2020" stroke-width="1.200"/>
<path d="M1166.500 134.500h6v2h-2v5h2v2h-6v-2h2v-5h-2zM1172.500 134.500h9.500M1172.500 136.500h9.500M1172.500 141.500h9.500M1172.500 143.500h9.500M1182 134.500v9" fill="none" stroke="#ececec" stroke-width="0.900"/><path d="M1169.500 139h12.500" stroke="#d04040" stroke-width="1.600"/>
<path d="M1228.500 104.500v-18h18.500v11M1228.500 104.500h8M1238.500 110.500a10.200 10.200 0 1 1-3.500-10.500" fill="none" stroke="#d8d8d8" stroke-width="1.150"/>
<circle cx="1245.3" cy="107.2" r="6" fill="#ffc107"/><path d="M1241.8 111.2h7l-1 3.500h-5z" fill="#ffc107"/><path d="M1242.8 115.2h5v1.200h-5zM1243.3 117.0h4v1.200h-4z" fill="#b8b8b8"/>
<path d="M1290.500 93.500l19.500-7.200 11.500 2.500v17M1290.500 93.500v20l10.500 4v-20zM1301 97.500l20.500-8.700M1301 117.500l10-3.800M1293.500 94.700v20M1297 96v20M1294.500 92l19.500-7M1298 93.500l20-7.200" fill="none" stroke="#ececec" stroke-width="1"/>
<path d="M1293.500 99l3.500-3M1293.500 103l3.500-3M1293.500 107l3.500-3M1293.500 111l3.500-3M1293.500 115l3.500-3" fill="none" stroke="#ececec" stroke-width="0.800"/>
<circle cx="1316.2" cy="107.2" r="6" fill="#ffc107"/><path d="M1312.7 111.2h7l-1 3.500h-5z" fill="#ffc107"/><path d="M1313.7 115.2h5v1.200h-5zM1314.2 117.0h4v1.200h-4z" fill="#b8b8b8"/>
<path d="M1389.500 94l18-7.500 6.500 3.500v12M1389.500 94v18.500l4.500 5V99zM1394 99l20-9M1394 117.500l14-5.500M1394 105l14.500-6.300M1394 111l14.500-6.300M1401 96v5.800M1408 93v5.700M1398 103.300v5.800M1405 100.200v5.800M1401 108v6" fill="none" stroke="#ececec" stroke-width="1"/>
<circle cx="1412.5" cy="107.2" r="6" fill="#ffc107"/><path d="M1409.0 111.2h7l-1 3.500h-5z" fill="#ffc107"/><path d="M1410.0 115.2h5v1.200h-5zM1410.5 117.0h4v1.200h-4z" fill="#b8b8b8"/>
<rect x="1463.5" y="87.5" width="5" height="5" fill="none" stroke="#3a96ff" stroke-width="1"/><rect x="1465.0" y="89.0" width="2" height="2" fill="#3a96ff"/><rect x="1473.5" y="87.5" width="5" height="5" fill="none" stroke="#3a96ff" stroke-width="1"/><rect x="1475.0" y="89.0" width="2" height="2" fill="#3a96ff"/><rect x="1463.5" y="97.5" width="5" height="5" fill="none" stroke="#3a96ff" stroke-width="1"/><rect x="1465.0" y="99.0" width="2" height="2" fill="#3a96ff"/><path d="M1475.5 92a3.500 3.500 0 0 1 2 6.400q-0.500 0.500-0.500 1.500h-3q0-1-0.500-1.500a3.500 3.500 0 0 1 2-6.400z" fill="#ff9c00"/><path d="M1474.5 100.5h2l-1 2z" fill="#d0d0d0"/>
<rect x="1463.5" y="109.5" width="5" height="5" fill="none" stroke="#a0a0a0" stroke-width="1"/><rect x="1473.5" y="109.5" width="5" height="5" fill="none" stroke="#3a96ff" stroke-width="1"/><rect x="1475.0" y="111.0" width="2" height="2" fill="#3a96ff"/><rect x="1463.5" y="119.5" width="5" height="5" fill="none" stroke="#3a96ff" stroke-width="1"/><rect x="1465.0" y="121.0" width="2" height="2" fill="#3a96ff"/><path d="M1475.5 114a3.500 3.500 0 0 1 2 6.400q-0.500 0.500-0.500 1.500h-3q0-1-0.500-1.500a3.500 3.500 0 0 1 2-6.400z" fill="#a8a8a8"/><path d="M1474.5 122.5h2l-1 2z" fill="#d0d0d0"/>
<rect x="1463.5" y="131.5" width="5" height="5" fill="none" stroke="#3a96ff" stroke-width="1"/><rect x="1465.0" y="133.0" width="2" height="2" fill="#3a96ff"/><rect x="1473.5" y="131.5" width="5" height="5" fill="none" stroke="#a0a0a0" stroke-width="1"/><rect x="1463.5" y="141.5" width="5" height="5" fill="none" stroke="#a0a0a0" stroke-width="1"/><path d="M1468.500 135.500l2 9.500 2-2.500 3 3.500 1.500-1.200-3-3.500 3.200-0.800z" fill="#2c2e33" stroke="#fff" stroke-width="1" stroke-linejoin="round"/>
<path d="M1520 86.500l13.700 8v16L1520 117.700l-13.700-7.200v-16z" fill="none" stroke="#3a96ff" stroke-width="1.150" stroke-linejoin="round"/>
<path d="M1506.300 94.500L1520 102.500l13.700-8M1520 102.500v15.200M1523 106.500l4.500-2.500v8l-4.500 2.500zM1523 111l4.500 3M1529 103l4-2.200M1529 103v7l4-2.200" fill="none" stroke="#ececec" stroke-width="1"/>
<path d="M1506.300 99.500l13.700 7M1506.300 109l8-4.500 5.700 3M1508 110.800l6.500-3.800 5.500 3" fill="none" stroke="#3a96ff" stroke-width="0.900"/>
<path d="M1569 87.5l6.500 3.700v7.500l-6.500 3.800-6.500-3.800v-7.500zM1562.5 91.2l6.500 3.800 6.500-3.800" fill="none" stroke="#ececec" stroke-width="1.100" stroke-linejoin="round"/><path d="M1569 95v7.500" stroke="#3a96ff" stroke-width="1.100"/>
<rect x="1558" y="106.500" width="22.500" height="21" fill="#45474d" stroke="#3a96ff" stroke-width="1"/><path d="M1569 109.5l6.500 3.700v7.500l-6.500 3.800-6.500-3.800v-7.500zM1562.5 113.2l6.500 3.800 6.500-3.800" fill="none" stroke="#ececec" stroke-width="1.100" stroke-linejoin="round"/><path d="M1569 117v7.500l6.500-3.800v-7.500z" fill="none" stroke="#3a96ff" stroke-width="1.200" stroke-linejoin="round"/>
<path d="M1565 135h-3.500v11.500h11.500v-3" fill="none" stroke="#c0c0c0" stroke-width="1"/><circle cx="1570.500" cy="137.500" r="6" fill="none" stroke="#c0c0c0" stroke-width="1"/><rect x="1565" y="134" width="7.500" height="7.500" rx="2" fill="#18191c" stroke="#3a96ff" stroke-width="1"/><path d="M1566 138.500l4-4M1566.500 141l5.500-5.500M1569 141.500l3.500-3.500" stroke="#3a96ff" stroke-width="0.900"/>
<path d="M1612.500 92.600l6.500-6v25l-6.500 6z" fill="#ff4848"/>
<path d="M1594.500 92.600h18v25h-18zM1594.500 92.600l6.500-6h18.200l-6.700 6M1619.200 86.600v25l-6.700 6" fill="none" stroke="#d8d8d8" stroke-width="1.150" stroke-linejoin="round"/>
<path d="M1594.500 98.600h18l6.500-6M1594.500 104.600h18l6.500-6M1594.500 111h18l6.500-6" fill="none" stroke="#d8d8d8" stroke-width="0.900"/>
<path d="M1595.500 98h16.500M1595.500 104h16.500M1595.500 110.400h16.500M1595.500 98l5-5M1595.500 104l5-5M1595.500 110.400l5-5" fill="none" stroke="#ffc107" stroke-width="1.100"/>
<text x="1645" y="97.700" font-family="Liberation Sans,sans-serif" font-size="13.500" letter-spacing="0.600" fill="#fff">IFC</text>
<path d="M1660 106.800h8.500v-5.800l8.700 8-8.700 8v-5.800h-8.500z" fill="#00c000"/>
<g fill="#fff"><rect x="4" y="104" width="2" height="1" fill="#aaa"/><rect x="4" y="106" width="2" height="2"/><rect x="4" y="108" width="2" height="1" fill="#000"/><rect x="4" y="110" width="2" height="2"/><rect x="4" y="112" width="2" height="1" fill="#000"/><rect x="4" y="114" width="2" height="2"/><rect x="4" y="116" width="2" height="1" fill="#000"/><rect x="4" y="118" width="2" height="2"/><rect x="4" y="120" width="2" height="1" fill="#000"/></g>
</svg>

</div>

<div id="doctabs">
<div class="abs" style="left:47px;top:0;width:67px;height:16px;background:#17181c"></div>
<div class="abs" style="left:261px;top:0;width:26px;height:16px;background:#17181c"></div>
<div class="abs" style="left:58px;top:0;font-size:11.5px;line-height:15px;letter-spacing:-0.4px;color:#fff">Start</div>
<div class="abs" style="left:126px;top:0;font-size:11.5px;line-height:15px;letter-spacing:0.35px;color:#fff;font-weight:bold;white-space:nowrap">305 - Point Cloud*</div>
<svg style="left:0;top:0" width="300" height="16" viewBox="0 0 300 16"><g stroke="#d4d4d8" stroke-width="2" fill="none"><path d="M99 3.5l8 8M107 3.5l-8 8"/><path d="M244.5 3.5l8 8M252.500 3.5l-8 8"/></g><path d="M270.500 8h9M275 3.500v9" stroke="#fff" stroke-width="1.300"/>
<g fill="#fff"><rect x="14" y="2" width="2" height="2"/><rect x="18" y="2" width="2" height="2"/><rect x="22" y="2" width="2" height="2"/><rect x="26" y="2" width="2" height="2"/><rect x="30" y="2" width="1" height="2"/></g></svg>
<svg style="left:1880px;top:0" width="40" height="16" viewBox="0 0 40 16"><g fill="#fff"><rect x="9" y="2" width="2" height="2"/><rect x="13" y="2" width="2" height="2"/><rect x="17" y="2" width="2" height="2"/><rect x="21" y="2" width="2" height="2"/><rect x="25" y="2" width="1" height="2"/></g></svg>
</div>

<div id="vp"></div>
<div class="abs" style="left:45px;top:191px;width:13px;height:813px;background:#8f8f94"></div>
<svg id="heat" style="left:0;top:0" width="1920" height="1040" viewBox="0 0 1920 1040">
<defs>
<clipPath id="hc"><path clip-rule="evenodd" d="M1079 197 L1060.4 197 L624 413 L572.5 459 L573.3 467 L580 473.7 L594.8 475.5 L608.3 488.5 L612.3 499.2 L650 512.2 L668.9 550.4 L694.4 612.3 L695.8 639.2 L694.4 658 L677 662 L650 660.2 L631.2 655.4 L623 633.9 L620.4 623 L604.8 597.5 L624.4 572 L598.9 550.4 L573.3 512.2 L555.8 511.4 L530.2 500.6 L488.5 542.3 L480.4 569.2 L475 576 L465.6 576 L460.2 571 L457 571 L457.5 584 L468.3 596.2 L473.7 595.6 L480.4 590.2 L543.7 582.2 L559.8 584.9 L598.9 615 L617.7 641.9 L617.7 652.7 L612.3 660.8 L585.4 664.8 L559.8 652.7 L558 654 L558 666.2 L607 682.3 L639.2 695.8 L660.8 699.8 L720 700.6 L934 703.7 L948 714 L938 725 L939 797 L942 826.7 L985.6 846.5 L1013 872 L1024 911.5 L1023 955 L1029 992 L1046.7 988 L1045.5 966.7 L1031 905.6 L1078 805 L1072 769.6 L1079 752Z M871.6 349.4 L866 352 L863 360 L861 400 L858.5 440 L858 465 L859 480 L862 489 L868 496 L875 502.5 L887 507.5 L900 510 L912 510.5 L925 508.8 L938 506 L950 501 L955 496 L957.5 490 L956.5 482 L950 469.5 L936.4 432.5 L920.6 401 L908 382 L896 367.5 L886 357 L878 351Z"/></clipPath>
<filter id="b3" x="-20%" y="-20%" width="140%" height="140%"><feGaussianBlur stdDeviation="3"/></filter>
<filter id="b6" x="-20%" y="-20%" width="140%" height="140%"><feGaussianBlur stdDeviation="6"/></filter>
<filter id="b10" x="-30%" y="-30%" width="160%" height="160%"><feGaussianBlur stdDeviation="10"/></filter>
<filter id="b16" x="-30%" y="-30%" width="160%" height="160%"><feGaussianBlur stdDeviation="16"/></filter>
<linearGradient id="lgx" gradientUnits="userSpaceOnUse" x1="560" y1="0" x2="840" y2="0"><stop offset="0" stop-color="#8cff6c"/><stop offset="0.35" stop-color="#e4ff18"/><stop offset="0.7" stop-color="#e8ff14"/><stop offset="1" stop-color="#c8ff34"/></linearGradient>
</defs>
<g clip-path="url(#hc)">
<rect x="440" y="190" width="660" height="820" fill="#fcff00"/>
<g filter="url(#b10)">
<path d="M762 365 L800 348 L828 362 L835 470 L800 500 L742 500 L747 420Z" fill="#ffe000"/>
<path d="M640 472 L700 445 L760 462 L800 505 L700 522 L650 502Z" fill="#ffe400"/>
<path d="M690 522 L800 497 L850 502 L850 536 L700 538Z" fill="#ffd800"/>
<path d="M640 412 L700 388 L742 396 L730 440 L660 446Z" fill="#d8ff28"/>
<path d="M790 340 L830 318 L860 330 L855 420 L840 520 L815 500 L822 380Z" fill="#d8ff28"/>
</g>
<path d="M570 462 L624 413 L1060 197 L1079 197" stroke="#ffc800" stroke-width="9" fill="none" filter="url(#b3)"/>
<path d="M574 472 L630 424 L680 398" stroke="#ffcc00" stroke-width="14" fill="none" filter="url(#b3)"/>
<g filter="url(#b6)">
<path d="M800 338 L860 308 L1000 252 L1079 218 L1079 236 L1000 278 L900 318 L850 352Z" fill="#c8ff34"/>
<path d="M822 322 L846 310 L862 336 L842 348Z" fill="#a0ff70"/>
</g>
<path d="M909 316 L1004 270 L1060 446 L966 476 Z" fill="#ffb000" filter="url(#b6)"/>
<path d="M926 318 L1002 282 L1044 425 L978 452 Z" fill="#ff8000" filter="url(#b10)"/>
<ellipse cx="982" cy="362" rx="26" ry="48" transform="rotate(-14 982 362)" fill="#ff3000" filter="url(#b10)"/>
<g filter="url(#b6)">
<path d="M1012 262 L1032 250 L1085 440 L1085 480 L1064 470Z" fill="#f4ff0c"/>
<path d="M1052 260 L1085 240 L1085 480 L1074 440Z" fill="#bcff40"/>
</g>
<g filter="url(#b3)">
<rect x="440" y="532" width="402" height="190" fill="url(#lgx)"/>
<rect x="840" y="538" width="260" height="180" fill="#3cffc8"/>
</g>
<g filter="url(#b6)">
<path d="M850 522 L1090 470 L1090 520 L960 540 L850 540Z" fill="#b4ff48"/>
<path d="M860 516 L1090 490 L1090 530 L960 548 L860 548Z" fill="#80ff80"/>
<path d="M905 545 L1000 545 L1045 700 L900 700Z" fill="#00ffff"/>
<path d="M1002 540 L1085 530 L1085 690 L1048 690Z" fill="#70ff98"/>
<path d="M1068 600 L1085 600 L1085 700 L1072 700Z" fill="#00d0ff"/>
</g>
<path d="M871.6 349.4 L866 352 L863 360 L861 400 L858.5 440 L858 465 L859 480 L862 489 L868 496 L875 502.5 L887 507.5 L900 510 L912 510.5 L925 508.8 L938 506 L950 501 L955 496 L957.5 490 L956.5 482 L950 469.5 L936.4 432.5 L920.6 401 L908 382 L896 367.5 L886 357 L878 351Z" fill="none" stroke="#a8ff58" stroke-width="36" filter="url(#b6)"/>
<path d="M871.6 349.4 L866 352 L863 360 L861 400 L858.5 440 L858 465 L859 480 L862 489 L868 496 L875 502.5 L887 507.5 L900 510 L912 510.5 L925 508.8 L938 506 L950 501 L955 496 L957.5 490 L956.5 482 L950 469.5 L936.4 432.5 L920.6 401 L908 382 L896 367.5 L886 357 L878 351Z" fill="none" stroke="#30ffd0" stroke-width="20" filter="url(#b3)"/>
<path d="M871.6 349.4 L866 352 L863 360 L861 400 L858.5 440 L858 465 L859 480 L862 489 L868 496 L875 502.5 L887 507.5 L900 510 L912 510.5 L925 508.8 L938 506 L950 501 L955 496 L957.5 490 L956.5 482 L950 469.5 L936.4 432.5 L920.6 401 L908 382 L896 367.5 L886 357 L878 351Z" fill="none" stroke="#00ccff" stroke-width="9" filter="url(#b3)"/>
<path d="M921 540 L940 600 L968 696" stroke="#00d0ff" stroke-width="24" fill="none" filter="url(#b6)"/>
<path d="M650 535 L842 540" stroke="#b0ff50" stroke-width="10" fill="none" filter="url(#b3)"/>
<path d="M921 540 L940 600 L968 696" stroke="#0094ff" stroke-width="8" fill="none" filter="url(#b3)"/>
<path d="M900 696 L1085 696" stroke="#00e0ff" stroke-width="10" fill="none" filter="url(#b3)"/>
<g filter="url(#b6)">
<path d="M550 645 L640 662 L700 668 L800 700 L550 705Z" fill="#98ff64"/>
<path d="M550 645 L600 660 L660 700 L550 705Z" fill="#6cff8c"/>
</g>
<path d="M450 495 L580 495 L630 572 L606 598 L560 585 L480 592 L455 600Z" fill="#a8ff50"/>
<path d="M450 495 L530 495 L545 585 L455 600Z" fill="#98ff64" filter="url(#b3)"/>
<path d="M600 598 L625 640 L620 665 L560 668 L555 650 L610 655 Z" fill="#98ff64" filter="url(#b3)"/>
<rect x="930" y="706" width="160" height="300" fill="#0068ff"/>
<g filter="url(#b6)">
<path d="M958 706 L1085 706 L1085 748 L1012 752 L962 734Z" fill="#0028e8"/>
<path d="M1012 748 L1085 744 L1085 800 L1012 800Z" fill="#0048f8"/>
<path d="M962 728 L1012 740 L1012 822 L962 832Z" fill="#0088ff"/>
<path d="M934 712 L960 712 L962 835 L1000 860 L1012 880 L940 830Z" fill="#00a8ff"/>
<path d="M932 700 L962 700 L958 762 L936 790Z" fill="#10e8f0"/>
<path d="M985 832 L1075 800 L1032 905Z" fill="#0058ff"/>
<path d="M1022 920 L1046 960 L1046 995 L1026 995Z" fill="#0078ff"/>
</g>
<path d="M960 707 L1085 707" stroke="#0018c8" stroke-width="4" fill="none" filter="url(#b3)"/>
<path d="M900 699 L1085 699" stroke="#40f0ff" stroke-width="7" fill="none" filter="url(#b3)"/>
</g>
</svg>
<!--CONTOURS-->
<svg id="contours" style="left:0;top:0" width="1920" height="1040" viewBox="0 0 1920 1040"><g fill="none" stroke-width="1" stroke-linejoin="round" shape-rendering="crispEdges">
<path stroke="#f4f000" d="M1079.2 226.7 1098.1 221.0 1121.2 217.1 1126.9 213.3 1124.0 210.4 1103.8 208.8 1102.3 206.9 1113.5 201.7 1121.5 198.8M1079.2 231.5 1094.2 227.7 1108.7 228.7 1117.3 235.4 1125.0 250.8 1132.7 261.3 1138.5 277.7 1150.0 300.8 1159.6 320.0 1167.3 341.2 1173.1 358.5 1176.5 372.9 1167.3 382.5 1155.8 388.3 1146.2 386.3 1142.3 379.6 1136.9 372.9 1141.3 368.1 1145.2 365.2 1143.3 361.9 1132.7 364.2 1121.2 345.0 1105.8 312.3 1092.3 285.4 1082.7 272.9 1079.2 272.3M1079.2 352.7 1084.6 364.2 1091.3 380.6 1088.5 375.8 1082.7 366.2 1079.2 358.5M1399.0 199.2 1401.0 202.7 1417.3 205.6 1432.7 207.5 1440.4 213.3 1448.1 215.2 1440.4 223.8 1429.8 224.8 1430.8 228.7 1440.4 231.5 1442.3 241.2 1438.5 252.7 1432.7 264.2 1428.8 277.7 1426.9 295.0 1421.2 308.5 1413.5 315.2 1409.6 327.7 1398.1 337.3 1397.1 352.7 1398.1 364.2 1395.2 368.1 1398.1 377.7 1394.2 395.0M1386.5 317.1 1390.4 315.2 1395.2 316.2 1394.2 320.0 1390.4 321.5 1387.5 320.0 1386.5 317.1M1079.2 458.5 1086.5 470.0 1089.4 481.5 1079.2 483.5M1394.2 395.0 1398.1 414.2 1401.9 433.5 1409.6 446.9 1412.5 450.8 1412.5 460.4 1407.7 466.2 1405.8 479.6 1409.6 482.5 1419.2 483.5 1426.9 489.2 1438.5 498.8 1444.2 504.6 1438.5 508.5 1440.4 521.9 1448.1 529.6M1407.7 395.0 1409.6 400.8 1404.8 404.6 1407.7 416.2 1413.5 413.3 1411.5 431.5 1419.2 437.3 1426.9 433.5 1430.8 448.8 1428.8 468.1 1434.6 481.5 1442.3 495.0 1448.1 506.5 1440.4 504.6 1430.8 505.6 1428.8 514.2 1434.6 529.6 1440.4 548.8 1444.2 564.2 1447.1 566.2M1408.7 467.1 1416.3 466.2 1415.4 473.8 1410.6 480.6 1409.6 471.9 1408.7 467.1M1426.9 494.0 1434.6 496.9 1442.3 503.7 1436.5 501.7 1426.9 496.0M1428.8 595.0 1429.8 610.4 1432.7 606.5 1433.7 595.0"/>
<path stroke="#c8f030" d="M1105.2 368.1 1106.7 363.3 1110.6 362.3 1114.4 365.2 1115.0 371.0 1111.5 373.8 1107.3 372.9 1105.2 368.1M1122.1 221.0 1140.4 217.7 1165.4 214.2 1159.6 211.9 1146.2 209.4 1144.2 207.5 1157.7 202.7 1161.5 198.5M1079.2 432.5 1084.6 443.1 1092.3 446.9 1090.4 439.2 1086.5 439.2 1079.2 429.6M1079.2 445.0 1089.4 468.1 1100.0 479.6 1079.2 487.3M1079.2 452.7 1088.5 471.9 1096.2 479.6 1079.2 484.4"/>
<path stroke="#a8f058" d="M1122.1 221.9 1142.3 223.8 1156.7 228.7 1156.7 233.5 1152.3 242.1 1153.8 254.6 1157.7 271.9 1165.4 296.9 1173.1 318.1 1178.8 343.1 1182.7 364.2 1181.7 377.7 1171.2 395.0M1391.3 199.2 1394.2 209.4 1407.7 213.3 1413.5 218.1 1422.1 220.0 1418.3 224.8 1428.8 231.5 1432.7 236.3 1428.8 245.0 1423.1 256.5 1419.2 271.9 1418.3 287.3 1415.4 296.9 1407.7 299.8 1402.9 306.5 1401.9 310.4 1394.2 312.3 1385.6 315.2 1382.3 320.0 1382.7 339.2 1386.5 358.5 1387.5 377.7 1388.5 395.0M1086.5 395.0 1098.1 402.7 1105.8 413.3 1121.2 414.2 1130.8 413.3 1148.1 402.7 1157.7 397.9 1171.2 395.0M1079.2 427.7 1084.6 435.4 1086.5 411.3 1094.2 421.9 1103.8 437.3 1114.4 447.9 1117.3 443.1 1116.3 431.5 1132.7 435.4 1138.5 429.6 1139.4 416.2 1151.9 406.5 1167.3 400.8 1182.7 395.0M1371.2 512.3 1369.2 529.6 1357.7 537.3 1367.3 546.9 1361.5 564.2 1354.8 570.0 1361.5 583.5 1373.1 595.0M1388.5 582.5 1400.0 584.4 1419.2 584.4 1428.8 587.3 1434.6 595.0M1407.7 593.1 1417.3 591.2 1425.0 595.0M1426.9 595.0 1426.9 614.2 1426.0 652.7 1425.0 687.3 1421.2 691.2 1409.6 695.0 1400.0 696.0M1428.8 595.0 1428.8 687.3 1425.0 693.1 1413.5 696.9M1430.8 612.3 1431.7 689.2 1428.8 695.0 1409.6 698.8"/>
<path stroke="#78f088" d="M1183.7 221.9 1200.0 218.1 1202.9 211.3 1194.2 208.1 1209.6 204.6 1217.3 199.2M1183.7 222.9 1192.3 224.8 1190.4 230.6 1176.0 239.2 1171.2 250.8 1166.3 258.5 1167.3 275.8 1169.2 291.2 1175.0 310.4 1179.8 329.6 1186.5 348.8 1188.5 368.1 1182.7 395.0M1308.7 199.2 1343.3 199.2 1348.1 209.4 1359.6 213.3 1378.8 216.2 1390.4 223.8 1400.0 231.5 1400.0 239.2 1396.2 246.9 1376.9 249.8 1348.1 254.6 1332.7 263.3 1331.2 269.0 1336.5 277.7 1337.5 287.3 1326.9 298.8 1309.6 308.5 1303.8 320.0 1300.0 339.2 1299.6 368.1 1301.0 372.9 1313.5 371.9 1316.3 364.2 1323.1 356.5 1342.3 337.3 1357.7 318.1 1369.2 306.5 1376.0 305.6 1378.8 310.4 1378.8 329.6 1376.0 345.0 1378.8 368.1 1380.8 395.0M1079.2 500.8 1092.3 495.0 1109.6 494.0 1111.5 498.8 1094.2 505.6 1096.2 508.5 1090.4 515.2 1095.2 531.5 1092.3 537.3 1098.1 546.9 1092.3 554.6 1096.2 568.1 1101.9 579.6 1106.7 581.5 1099.0 587.3 1100.0 595.0M1079.2 499.8 1116.3 487.3 1126.0 501.7 1126.9 489.2 1143.3 471.9 1142.3 466.2 1133.7 456.5 1140.4 454.6 1148.1 429.6 1145.2 416.2 1167.3 409.4 1190.4 395.0M1380.8 395.0 1382.7 429.6 1380.8 475.8 1378.8 510.4 1378.8 525.8 1381.7 558.5 1390.4 572.9 1398.1 565.2 1407.7 560.4 1415.4 566.2 1428.8 570.0 1436.5 579.6 1438.5 591.2 1444.2 589.2 1446.2 584.4M1388.5 395.0 1392.3 443.1 1386.5 462.3 1385.6 479.6 1390.4 477.7 1395.2 466.2 1397.1 483.5 1409.6 489.2 1411.5 514.2 1405.8 533.5 1398.1 537.3 1390.4 529.6 1388.5 489.2 1385.6 489.2 1379.8 514.2 1376.9 525.8 1381.7 541.2 1382.7 560.4M1100.0 595.0 1103.8 608.5 1109.6 629.6 1108.7 640.2 1094.2 648.8 1086.5 646.9 1079.2 631.5M1328.8 595.0 1342.3 604.6 1351.9 618.1 1359.6 629.6 1365.4 635.4 1371.2 634.4 1375.0 629.6 1377.9 623.8 1381.7 632.5 1385.6 629.6 1388.5 606.5 1398.1 608.5 1401.9 598.8 1409.6 595.0M1379.8 595.0 1383.7 604.6 1386.5 595.0M1434.6 637.3 1435.6 671.9 1433.7 691.2 1432.7 696.9 1438.5 708.5 1441.3 706.5 1442.3 700.8M1423.1 595.0 1420.2 604.6 1422.1 612.3 1426.0 617.1M1446.2 612.3 1444.2 621.9 1438.5 625.8 1434.6 624.8 1431.7 633.5"/>
<path stroke="#40f0b0" d="M1213.5 222.9 1212.5 226.7 1201.9 235.4 1190.4 245.0 1184.6 258.5 1178.8 273.8 1177.9 287.3 1180.8 306.5 1184.6 325.8 1190.4 337.3 1200.0 339.2 1197.1 348.8 1192.3 358.5 1190.4 395.0M1226.9 208.8 1238.5 207.5 1256.7 203.1 1275.0 206.5M1226.9 209.4 1248.1 214.2 1268.3 218.1 1269.2 221.0 1257.7 222.3 1213.5 222.9M1275.0 206.5 1294.2 208.5 1313.5 205.6 1336.5 207.5 1346.2 214.2 1332.7 219.0 1326.9 221.9 1328.8 225.8 1350.0 228.7 1338.5 232.5 1323.1 238.3 1313.5 246.0 1305.8 254.6 1301.9 264.2 1303.8 272.9 1298.1 277.7 1294.2 289.2 1294.2 302.7 1293.3 321.9 1290.4 345.0 1285.6 368.1 1283.7 395.0M1313.5 219.0 1325.0 215.2 1327.9 220.0 1323.1 222.9 1314.4 221.9 1313.5 219.0M1336.5 395.0 1340.4 385.4 1348.1 377.7 1354.8 379.6 1357.7 389.2 1359.6 395.0M1198.1 395.0 1190.4 408.5 1173.1 410.4 1153.8 420.0 1154.8 437.3 1150.0 458.5 1151.9 461.3 1182.7 461.3 1209.6 469.0 1275.0 498.8M1134.6 489.2 1151.9 479.6 1178.8 473.8 1209.6 477.7 1228.8 487.3 1275.0 514.2M1134.6 489.2 1132.7 502.7 1128.8 516.2 1132.7 525.8 1130.8 530.6 1136.5 548.8 1142.3 568.1 1146.2 595.0M1283.7 395.0 1281.7 406.5 1284.6 429.6 1294.2 440.2 1313.5 436.3 1325.0 426.7 1328.8 414.2 1326.9 406.5 1336.5 395.0M1358.7 395.0 1362.5 410.4 1371.2 443.1 1375.0 462.3 1376.0 471.9 1378.8 476.7 1371.2 479.6 1369.2 487.3 1371.2 498.8 1361.5 510.4 1357.7 527.7 1342.3 529.6 1311.5 524.8 1319.2 529.6 1338.5 539.2 1342.3 546.9 1325.0 554.6 1321.2 564.2 1323.1 579.6 1326.9 595.0M1146.2 595.0 1144.2 610.4 1138.5 621.9 1126.9 629.6 1124.0 636.3 1128.8 646.9 1125.0 656.5 1105.8 668.1 1092.3 668.1 1084.6 660.4 1079.2 650.8M1386.5 641.2 1389.4 640.2 1391.3 654.6 1387.5 656.5 1386.2 650.8 1386.5 641.2M1386.5 665.2 1392.3 666.2 1417.3 661.3 1420.2 664.2 1416.3 670.0 1418.3 681.5 1413.5 687.3 1394.2 692.1 1388.5 696.0 1385.0 695.0 1386.5 665.2M1385.6 699.8 1382.7 729.6 1381.7 768.1 1382.7 795.0M1385.6 699.8 1392.3 697.9 1393.3 700.8 1409.6 698.8 1425.0 702.7 1432.7 716.2 1438.5 721.9 1440.0 730.6M1374.0 743.1 1376.9 742.1 1377.9 775.8 1376.0 777.7 1373.1 768.1 1374.0 743.1M1306.2 795.0 1303.2 805.1 1302.2 845.5 1308.3 863.6 1316.3 872.7 1336.5 876.8 1350.7 878.8 1357.7 884.8 1369.8 880.8 1373.9 883.8 1375.9 893.9 1379.9 889.9 1381.9 914.1 1389.0 918.2 1397.1 914.1 1404.2 905.0 1404.2 895.9 1397.1 881.8 1392.0 863.6 1395.1 827.3 1389.0 813.2 1383.0 801.1 1381.9 795.0"/>
<path stroke="#20d4e4" d="M1275.0 228.1 1239.4 229.6 1240.4 239.2 1227.9 239.6 1209.6 256.5 1193.3 277.7 1190.4 295.0 1190.0 310.4 1193.3 327.7 1201.9 334.4 1201.0 348.8 1196.2 368.1 1198.1 395.0M1275.0 228.7 1290.4 230.6 1303.8 232.5 1309.6 226.7 1317.3 225.8 1321.2 229.6 1313.5 241.2 1298.1 252.7 1284.6 266.2 1275.0 272.9M1207.7 395.0 1198.1 408.5 1173.1 414.2 1164.4 423.8 1162.5 443.1 1159.0 457.5 1190.4 460.4 1225.0 471.9 1275.0 493.1M1146.2 489.2 1161.5 479.6 1182.7 476.7 1209.6 480.6 1228.8 491.2 1232.7 502.7 1232.7 516.2 1248.1 529.6 1255.8 545.0 1267.3 562.3 1275.0 584.4M1146.2 489.2 1147.1 510.4 1141.3 516.2 1146.2 533.5 1150.0 548.8 1153.8 568.1 1147.1 569.0 1148.1 595.0M1245.2 395.0 1248.1 404.6 1255.8 416.2 1253.8 429.6 1238.5 433.5 1236.2 441.2 1238.5 446.9 1248.1 454.6 1259.6 464.2 1275.0 471.0M1275.0 515.2 1282.7 525.8 1290.4 543.1 1290.4 552.7 1303.8 571.9 1306.7 587.3 1307.7 595.0M1275.0 584.4 1282.7 595.0M1149.0 595.0 1148.1 614.2 1140.4 639.2 1132.7 656.5 1113.5 671.9 1094.2 676.7 1084.6 671.9 1079.2 664.2M1091.3 696.0 1121.2 683.5 1125.0 685.4 1123.1 699.8 1101.9 701.7 1091.3 696.0M1101.0 695.0 1121.2 685.4 1123.1 696.9 1103.8 699.8 1101.0 695.0M1275.0 731.5 1267.3 745.0 1262.5 754.6 1262.5 779.6 1266.3 780.0 1259.6 787.3 1257.7 795.0M1259.8 795.0 1258.8 804.1 1254.7 809.1 1252.7 835.4 1248.7 859.6 1251.7 869.7 1269.9 881.8 1284.0 887.9 1300.2 900.0 1306.2 914.1 1314.3 926.2 1330.5 932.3 1352.7 928.3 1362.8 922.2 1370.8 910.1 1372.9 924.2 1377.9 925.2 1383.0 931.3 1393.0 930.3 1407.2 922.2 1419.3 908.1 1428.4 891.9 1431.0 870.7"/>
<path stroke="#20b0f4" d="M1275.0 258.5 1255.8 279.6 1244.2 288.3 1228.8 296.0 1221.2 304.6 1216.3 314.2 1209.6 329.6 1206.7 348.8 1205.8 368.1 1207.7 395.0M1275.0 275.8 1267.3 291.2 1259.6 302.7 1250.0 316.2 1251.9 321.9 1244.2 333.5 1242.3 348.8 1246.2 368.1 1248.1 387.3 1245.2 395.0M1275.0 257.5 1286.5 248.8 1300.0 239.2 1306.7 230.6 1312.5 225.8 1319.2 227.7 1313.5 236.3 1300.0 246.9 1286.5 258.5 1275.0 267.1M1275.0 261.3 1294.2 246.0 1307.7 232.5 1313.5 228.7M1213.5 395.0 1207.7 408.5 1186.5 414.2 1190.4 418.1 1184.6 421.9 1170.2 440.2 1173.1 452.7 1184.6 454.6 1201.9 459.4 1223.1 465.2 1225.0 462.3 1217.3 456.5 1213.5 439.2 1213.5 420.0 1219.2 412.3 1220.2 395.0M1165.4 484.4 1190.4 480.6 1209.6 482.5 1223.1 491.2 1228.8 502.7 1226.9 518.1 1228.8 533.5 1240.4 546.9 1248.1 568.1 1253.8 595.0M1165.4 484.4 1159.6 504.6 1155.8 520.0 1151.0 533.5 1155.8 558.5 1160.6 577.7 1163.5 595.0M1275.0 471.0 1288.5 473.8 1300.0 483.5 1321.2 482.5 1307.7 485.4 1306.7 490.2 1323.1 495.0 1325.0 504.6 1323.1 514.2 1303.8 508.5 1275.0 493.1M1158.7 595.0 1159.6 602.7 1153.8 606.5 1148.1 629.6 1138.5 650.8 1128.8 664.2 1117.3 675.8 1100.0 683.5 1086.5 685.4 1079.2 679.6M1082.7 699.8 1088.5 699.8M1163.5 595.0 1166.3 610.4 1163.5 633.5 1155.8 652.7 1151.9 664.2 1148.1 683.5 1150.0 695.0 1157.7 714.2 1155.8 723.8 1132.7 714.2 1123.1 710.4 1101.9 704.6 1091.3 699.8M1137.5 658.5 1142.3 660.4 1142.3 668.1 1136.5 679.6 1134.6 691.2 1141.3 705.6 1132.7 708.5 1113.5 702.7 1092.3 698.8M1254.8 595.0 1263.5 614.2 1267.3 631.5 1275.0 641.2M1275.0 709.4 1267.3 718.1 1259.6 733.5 1253.8 748.8 1252.9 768.1 1251.0 795.0M1283.7 595.0 1290.4 606.5 1298.1 614.2 1301.0 629.6 1309.6 646.9 1311.5 662.3 1312.5 681.5 1309.6 689.2 1310.6 693.1 1359.6 694.0 1360.6 696.0 1311.5 698.8 1294.2 710.4 1282.7 723.8 1275.0 731.5M1249.7 795.0 1247.7 807.1 1244.7 825.3 1239.6 859.6 1241.6 875.8 1245.7 886.9 1261.8 889.9 1278.0 900.0 1292.1 914.1 1304.2 930.3 1316.3 938.3 1328.4 940.4 1348.6 937.3 1362.8 935.3 1366.8 929.3 1367.8 939.4 1373.9 943.4 1374.9 950.5 1380.9 953.5 1389.0 948.4 1399.1 936.3 1417.3 926.2 1420.3 918.2 1429.4 910.1 1431.8 902.0"/>
<path stroke="#2090f4" d="M1275.0 264.2 1257.7 283.5 1244.2 306.5 1232.7 329.6 1221.2 345.0 1214.4 354.6 1211.5 368.1 1209.6 395.0M1275.0 269.0 1259.6 289.2 1248.1 310.4 1238.5 329.6 1228.8 348.8 1223.1 368.1 1220.2 395.0M1275.0 261.3 1256.7 281.5 1242.3 304.6 1228.8 329.6 1218.3 348.8 1213.5 395.0M1275.0 264.2 1296.2 247.9 1310.6 234.4 1316.3 229.6M1209.6 395.0 1205.8 414.2 1199.0 429.6 1199.0 450.8 1203.8 458.5 1209.6 452.7 1208.7 429.6 1213.5 395.0M1176.0 493.1 1182.7 488.3 1190.4 493.1 1194.2 485.4 1205.8 484.4 1217.3 495.0 1223.1 510.4 1226.0 529.6 1234.6 554.6 1242.3 575.8 1246.2 595.0M1176.0 493.1 1175.0 510.4 1168.3 527.7 1163.5 535.4 1165.4 548.8 1164.4 568.1 1169.2 595.0M1171.2 595.0 1178.8 614.2 1184.6 637.3 1186.5 658.5 1185.6 675.8 1185.6 702.7 1182.7 716.2 1178.8 710.4 1171.2 702.7 1163.5 698.8 1157.7 691.2 1159.6 686.3 1178.8 684.4 1179.8 689.2 1182.7 689.2M1244.2 595.0 1248.1 618.1 1253.8 641.2 1259.6 658.5 1267.3 671.9 1275.0 679.6M1275.0 702.7 1265.4 704.6 1255.8 716.2 1248.1 731.5 1244.2 748.8 1244.2 768.1 1246.2 779.6 1244.2 795.0M1275.0 642.1 1284.6 650.8 1288.5 658.5 1293.3 668.1 1296.2 681.5 1300.0 691.2 1306.7 696.9 1286.5 697.9 1275.0 698.8M1275.0 679.6 1282.7 687.3 1286.5 695.0 1294.2 696.0M1275.0 709.4 1284.6 698.8M1243.6 795.0 1240.6 815.2 1237.6 841.4 1232.5 865.7 1235.6 879.8 1241.6 893.9 1255.8 898.0 1269.9 906.0 1286.0 922.2 1300.2 936.3 1316.3 944.4 1332.5 946.4 1350.7 942.4 1362.8 943.4 1364.8 952.5 1369.8 956.5 1368.8 966.6 1376.9 972.7 1385.0 966.6 1397.1 954.5 1409.2 948.4 1417.3 936.3 1427.4 930.3 1432.4 920.2"/>
<path stroke="#30e8c8" d="M1275.0 285.4 1267.3 291.2 1271.2 310.4 1271.2 345.0 1267.3 371.9 1270.2 395.0M1270.2 395.0 1273.1 414.2 1274.0 433.5 1270.2 441.2 1275.0 449.8M1275.0 449.8 1294.2 459.4 1313.5 454.6 1338.5 448.8 1350.0 437.3 1351.9 422.9 1352.9 445.0 1355.8 447.9 1347.1 458.5 1350.0 469.0 1340.4 475.8 1340.4 481.5 1354.8 479.2 1341.3 481.5 1348.1 495.0 1350.0 510.4 1346.2 520.0 1340.4 524.8 1323.1 522.9 1303.8 514.2 1275.0 498.8M1309.6 595.0 1317.3 614.2 1326.0 634.4 1327.9 646.9 1336.5 662.3 1343.3 673.8 1342.3 680.6 1336.5 684.4 1326.9 687.3 1326.0 689.2 1330.8 690.2 1350.0 690.2 1353.8 687.3 1373.1 688.3 1377.9 693.1 1378.8 710.4 1378.8 727.7 1376.0 733.5 1373.5 727.7 1375.0 712.3 1371.2 706.5 1365.4 701.7 1351.9 702.7 1341.3 708.5 1340.4 725.8 1332.7 737.3 1325.0 741.2 1316.3 748.8 1313.5 760.4 1307.7 770.0 1310.6 780.6 1305.8 787.3 1305.4 795.0"/>
<path stroke="#1868f4" d="M1223.1 354.6 1221.2 362.3 1225.0 371.9 1213.8 395.0M1201.9 485.4 1200.0 495.0 1198.1 514.2 1193.3 518.1 1194.2 533.5 1190.4 560.4 1184.6 566.2 1179.8 583.5 1176.0 595.0M1159.6 595.0 1175.0 614.2 1182.7 643.1 1185.6 662.3M1163.5 596.9 1176.9 618.1 1183.7 645.0M1230.8 595.0 1234.6 614.2 1239.4 630.6 1235.6 639.2 1238.5 656.5 1248.1 677.7 1265.4 689.2 1275.0 691.2M1275.0 698.8 1259.6 699.8 1248.1 708.5 1240.4 721.9 1234.6 737.3 1232.7 754.6 1234.6 775.8 1238.5 779.6 1232.7 785.4 1230.8 795.0M1232.5 795.0 1231.5 825.3 1225.5 855.6 1226.5 875.8 1233.6 891.9 1245.7 902.0 1261.8 912.1 1280.0 928.3 1296.1 942.4 1316.3 950.5 1336.5 955.5 1346.6 954.5 1358.7 950.5 1360.7 962.6 1368.8 974.7 1376.9 984.8 1386.0 989.8 1391.0 982.8 1397.1 974.7 1409.2 962.6 1423.3 954.5 1429.4 940.4 1431.4 932.3"/>
<path stroke="#f8c400" d="M1461.5 210.4 1461.2 215.2 1448.1 220.0 1442.3 223.8 1444.2 239.2 1442.3 252.7 1436.5 268.1 1431.7 285.4 1430.8 300.8 1425.0 318.1 1421.2 333.5 1415.4 348.8 1412.5 362.3 1407.7 373.8 1411.5 381.5 1407.7 389.2 1407.7 395.0M1421.2 395.0 1417.3 414.2 1417.3 429.6 1423.1 431.5 1428.8 420.0 1434.6 400.8 1434.6 418.1 1432.7 433.5 1434.6 452.7 1438.5 471.9 1444.2 491.2 1450.0 502.7"/>
<path stroke="#f89400" d="M1460.6 218.1 1446.2 225.8 1448.1 239.2 1444.2 256.5 1438.5 275.8 1434.6 296.9 1432.7 314.2 1428.8 329.6 1426.9 348.8 1423.1 368.1 1420.2 385.4 1421.2 395.0M1460.6 221.0 1449.0 227.7 1451.0 241.2 1449.0 255.6 1443.3 258.5 1440.4 277.7 1438.5 296.9 1435.6 318.1 1434.6 333.5 1430.8 354.6 1432.7 368.1 1429.8 387.3 1426.9 395.0M1426.9 395.0 1423.1 410.4 1430.8 414.2 1434.6 398.8 1437.5 418.1 1436.5 441.2 1438.5 460.4 1442.3 475.8 1448.1 491.2 1450.0 498.8"/>
<path stroke="#f85800" d="M1460.6 223.8 1451.9 229.6 1453.8 241.2 1450.0 258.5 1446.2 275.8 1442.3 296.9 1440.4 314.2 1438.5 333.5 1440.4 348.8 1438.5 360.4 1436.5 379.6 1440.4 395.0M1457.7 229.6 1452.9 243.1 1451.9 258.5 1448.1 275.8 1445.2 295.0 1442.3 318.1 1441.3 337.3 1442.3 354.6 1440.4 368.1 1436.5 387.3 1434.6 395.0M1434.6 395.0 1436.5 406.5 1439.4 423.8 1440.4 443.1 1442.3 462.3 1446.2 479.6 1450.0 493.1M1440.4 395.0 1438.5 414.2 1438.5 433.5 1440.4 452.7 1444.2 471.9 1450.0 495.0"/>
<path stroke="#f02000" d="M1456.7 225.8 1455.8 233.5 1451.0 241.2 1453.8 252.7 1450.0 268.1 1451.0 285.4 1446.2 302.7 1444.2 321.9 1442.3 345.0 1446.2 354.6 1444.2 368.1 1448.1 387.3 1444.2 395.0M1462.5 227.7 1459.6 245.0 1460.6 258.5 1456.7 275.8 1457.7 295.0 1453.8 314.2 1452.9 333.5 1449.0 348.8 1452.9 360.4 1451.0 375.8 1452.9 395.0M1452.9 395.0 1451.0 414.2 1448.1 433.5 1448.1 452.7 1449.0 471.9 1451.0 487.3M1444.2 395.0 1442.3 414.2 1442.3 433.5 1444.2 452.7 1447.1 471.9 1451.0 483.5M1448.1 395.0 1445.2 414.2 1444.2 433.5"/>
<path stroke="#e41000" d="M1459.6 255.6 1453.8 262.3 1448.1 270.0 1452.9 271.9 1458.7 272.9 1453.8 281.5 1451.0 302.7 1450.0 320.0 1446.2 339.2 1451.9 345.0 1455.8 364.2 1451.9 379.6 1451.9 395.0M1458.7 276.7 1454.8 285.4 1452.9 302.7 1451.0 318.1M1464.4 243.1 1462.5 258.5 1460.6 277.7 1459.6 295.0 1455.8 318.1 1454.8 337.3 1451.9 348.8 1454.8 368.1 1453.8 395.0M1453.8 395.0 1452.9 410.4 1449.0 425.8 1447.1 443.1 1448.1 462.3 1450.0 479.6M1451.9 395.0 1448.1 406.5 1446.2 420.0"/>
<path stroke="#0818f0" d="M1202.9 496.9 1203.8 518.1 1205.8 548.8 1205.8 595.0M1207.7 485.4 1207.7 510.4 1208.7 548.8 1209.6 595.0M1206.7 500.8 1207.7 595.0M1211.5 595.0 1210.6 548.8 1212.5 510.4 1209.6 495.0M1079.2 705.6 1094.2 708.5 1113.5 716.2 1132.7 727.7 1148.1 741.2 1159.6 754.6 1167.3 766.2 1173.1 771.9M1079.2 708.5 1094.2 712.3 1113.5 721.0 1130.8 732.5 1144.2 745.0 1155.8 758.5 1165.4 773.8 1171.2 787.3 1173.1 795.0M1079.2 715.2 1098.1 721.9 1117.3 733.5 1132.7 745.0 1146.2 760.4 1155.8 777.7 1159.6 795.0M1204.8 595.0 1205.4 652.7 1207.7 691.2 1204.2 729.6 1202.9 779.6 1196.2 784.4 1196.2 795.0M1207.7 595.0 1208.7 695.0 1207.7 795.0M1210.6 595.0 1211.5 691.2 1211.9 795.0M1212.5 595.0 1213.1 671.9 1212.5 695.0M1226.5 795.0 1225.5 815.2 1221.4 855.6 1223.5 875.8 1233.6 895.9 1251.7 908.1 1269.9 924.2 1288.1 938.3 1306.2 948.4 1324.4 955.5 1340.6 959.5 1352.7 957.5 1354.7 966.6 1358.7 976.7 1368.8 984.8 1376.9 992.9 1393.0 995.9 1403.1 988.8 1411.2 977.7 1425.4 970.7 1428.4 952.5 1432.4 939.4M1218.4 795.0 1220.4 815.2 1215.4 845.5 1212.4 871.7 1216.4 883.8 1223.5 893.9M1212.4 795.0 1214.4 819.2 1211.3 851.5 1209.3 869.7 1213.4 879.8M1175.0 838.4 1194.2 840.4 1195.2 835.4 1191.2 825.3 1195.2 807.1 1196.2 795.0M1177.0 795.0 1176.6 810.1 1180.0 813.2 1183.1 808.1 1183.5 795.0M1146 823 1155 812 1160 800 1164 795M1173 795 1174 838 1194 840 1196 795"/>
<path stroke="#1040f4" d="M1213.5 510.4 1213.5 543.1 1221.2 548.8 1225.0 564.2 1226.9 575.8 1225.0 579.6 1232.7 595.0M1079.2 712.3 1094.2 716.2 1113.5 725.8 1128.8 737.3 1140.4 748.8 1151.9 762.3 1161.5 779.6 1167.3 795.0M1079.2 748.8 1090.4 741.2 1103.8 742.1 1113.5 743.1 1115.4 746.9M1114.4 732.5 1119.2 729.6 1116.3 734.4 1123.1 738.3 1126.9 743.1 1128.8 748.8M1171.2 695.0 1173.1 692.1 1180.8 693.1 1179.8 706.5 1175.0 710.4 1175.0 729.6 1178.8 745.0 1178.8 764.2 1181.7 765.2 1184.6 745.0 1186.5 714.2 1188.5 691.2 1190.4 683.5 1189.4 662.3 1188.5 650.8 1190.4 660.4 1196.2 668.1 1196.2 677.7 1203.5 679.2M1213.5 610.4 1218.3 614.2 1217.3 625.8 1225.0 637.3 1226.9 652.7 1228.8 671.9 1232.7 687.3 1238.5 690.6 1265.4 694.0 1275.0 696.0M1212.5 692.1 1225.0 693.1 1238.5 693.1 1223.1 695.0 1219.2 702.7 1217.3 718.1 1218.3 737.3 1221.2 756.5 1225.0 775.8 1226.9 779.6 1223.1 787.3 1225.0 795.0M1275.0 696.0 1265.4 696.9 1248.1 696.9 1238.5 702.7 1228.8 712.3 1226.9 729.6 1223.1 748.8 1225.0 768.1 1226.9 795.0M1184.6 718.1 1190.4 685.4 1192.3 675.8M1186.5 795.0 1185.6 768.1 1188.5 745.0 1196.2 745.0 1198.1 754.6 1201.0 756.5 1202.9 729.6M1160 795 1163 815 1161 838"/>
</g></svg>
<!--/CONTOURS-->
<svg style="left:0;top:0" width="1920" height="1040" viewBox="0 0 1920 1040">
<path d="M150.500 893V836" stroke="#10b858" stroke-width="2.600"/><path d="M150.500 821l-5.500 15h11z" fill="#10b858"/>
<path d="M145.500 805l5 7 5-7M150.500 812v7" stroke="#10b858" stroke-width="1" fill="none"/>
<path d="M155 899.500h58" stroke="#e87472" stroke-width="2.400"/><path d="M229 899.500l-15-5v10z" fill="#e87472"/>
<path d="M232 893.500l11 13M243 893.500l-11 13" stroke="#e87472" stroke-width="1" fill="none"/>
<circle cx="150.500" cy="899.500" r="5.500" fill="#1450a8"/><path d="M146 897l4.500-3 4.500 3-4.500 3z" fill="#2a6cd0"/>
<path d="M86.500 964l-15 14h5v11h7v-7h6v7h7v-11h5z" fill="#8f8f94"/>
</svg>
<div id="layouts" style="top:1004px">
<div class="abs" style="left:0;top:17px;width:1828px;height:1px;background:#77787c"></div>
<div class="abs" style="left:83px;top:0;width:43px;height:17px;background:#34363b"></div>
<div class="abs" style="left:126px;top:1px;width:1px;height:16px;background:#3d3f44"></div><div class="abs" style="left:177px;top:1px;width:1px;height:16px;background:#3d3f44"></div><div class="abs" style="left:228px;top:1px;width:1px;height:16px;background:#3d3f44"></div><div class="abs" style="left:243px;top:1px;width:1px;height:16px;background:#3d3f44"></div>
<div class="abs" style="left:88px;top:3px;font-size:11.5px;font-weight:bold;letter-spacing:0.5px;color:#fff">Model</div>
<div class="abs" style="left:130px;top:3px;font-size:11.5px;color:#fff;letter-spacing:0.1px">Layout1</div>
<div class="abs" style="left:182px;top:3px;font-size:11.5px;color:#fff;letter-spacing:0.1px">Layout2</div>
<div class="abs" style="left:231px;top:2px;font-size:13px;color:#fff">+</div>
<svg style="left:0;top:0" width="90" height="18" viewBox="0 0 90 18">
<g fill="none" stroke="#55575c" stroke-width="1"><path d="M1.500 15.500v-14h13"/><path d="M18.500 15.500v-14h13"/><path d="M35.500 15.500v-14h13"/><path d="M52.500 15.500v-14h13"/><path d="M69.500 12.500v-11h13"/></g>
<g fill="#fff"><rect x="4" y="4" width="1.500" height="9"/><path d="M11 4v9l-5-4.500z"/><path d="M28 4v9l-5.500-4.500z"/><path d="M39.500 4v9l5.500-4.500z"/><path d="M55 4v9l5-4.500z"/><rect x="60.500" y="4" width="1.500" height="9"/></g>
<rect x="72.500" y="4.500" width="7" height="6" fill="none" stroke="#fff" stroke-width="1"/><path d="M74 6.500h4M74 8.500h4" stroke="#fff" stroke-width="1"/>
</svg>
</div>

<div id="left"></div>
<svg style="left:0;top:181px" width="46" height="100" viewBox="0 181 46 100">
<g fill="none" stroke="#fff" stroke-width="1.300">
<path d="M11.300 208.800L23 196l11.800 12.800"/><path d="M14.500 206v10.500h17V206"/><path d="M20.500 216.500v-7h4.500v7"/>
<rect x="11.600" y="244.600" width="12" height="6"/><path d="M14.500 247.600h6"/><rect x="22.800" y="254.600" width="11.800" height="5"/><rect x="22.800" y="262.600" width="11.800" height="5"/><path d="M17.500 250.600v14.500h5.300M17.500 257h5.300"/>
</g></svg>
<div id="right"></div>
<div class="abs" style="left:1874px;top:190px;width:1px;height:832px;background:#77787c"></div>
<!--RIGHTICONS-->
<svg style="left:1874px;top:181px" width="46" height="520" viewBox="1874 181 46 520">
<g fill="none" stroke="#e6e6e6" stroke-width="1.200" stroke-linejoin="round" stroke-linecap="round">
<path d="M1893.500 212q0-2-2.500-4.500a9.300 9.300 0 1 1 13 0q-2.500 2.500-2.500 4.500"/><path d="M1893.800 212.500h7.500M1894 214.500l7-0.700M1894.300 216.500l6.500-0.700M1895.500 218.300l4-0.400" stroke-width="1"/>
<path d="M1885.500 248h4M1894.500 248h14.500M1885.500 256h15.500M1906.500 256h2.500M1885.500 264.200h8M1899 264.200h10" stroke="#b4b4b4" stroke-width="1.400"/>
<circle cx="1891.500" cy="248" r="2.600"/><circle cx="1903.700" cy="256" r="2.600"/><circle cx="1896.300" cy="264.200" r="2.600"/>
<path d="M1885.700 301.500a11 7.500 0 0 1 22 0q0 5-11 11-11-6-11-11z" stroke-width="1.100"/><path d="M1896.700 294v18.500M1893.500 294.500q-5 7 3.200 18M1900 294.500q5 7-3.300 18M1890 296q-4 8 6.700 16.500M1903.500 296q4 8-6.800 16.500" stroke-width="0.900"/><rect x="1894.500" y="314.300" width="4.300" height="3.300"/>
<circle cx="1896.800" cy="355.800" r="11.700"/><path d="M1895.500 351.500q3.500 4.500 0 9M1899.500 348q6.500 8 0 16"/>
<rect x="1885.500" y="396.500" width="23" height="3.200"/><rect x="1885.500" y="401.800" width="23" height="7.600"/><rect x="1885.500" y="412.600" width="23" height="3.200"/>
<path d="M1888 399.500l3-3M1892 399.500l3-3M1896 399.500l3-3M1900 399.500l3-3M1904 399.500l3-3" stroke-width="0.900"/>
<path d="M1886.300 444.500h22v3.500h-7q-2.500 0-2.500 2.500v11q0 2.500 2.500 2.500h7v3.500h-22v-3.500h7q2.500 0 2.500-2.500v-11q0-2.500-2.500-2.500h-7z"/>
<path d="M1896.600 494l11.500 5.500-11.500 5.500-11.500-5.500z"/><path d="M1885.100 505.500l11.500 5.500 11.500-5.5M1885.100 511.500l11.500 5.500 11.500-5.500"/>
<path d="M1897.500 548l10.500 5v9l-10.500 5-10.500-5v-9zM1887 553l10.500 5 10.500-5M1897.500 558v9"/><ellipse cx="1897.500" cy="547" rx="3.300" ry="2"/><path d="M1894.200 547v3.500q3.300 2.500 6.600 0v-3.500"/>
<path d="M1890 615h14.500a4.700 4.700 0 0 0 0-9.400a6.300 6.300 0 0 0-12.200-2a5.700 5.700 0 0 0-2.300 11.400z"/><path d="M1897 612.500v-6.500M1894.500 608.500l2.500-2.500 2.500 2.500" stroke-width="1"/>
<path d="M1899.500 646.500l7.500 7.500-4 1.500-3 4.500 0.500 5.500-4.500-4-8.500 4.500 4.500-8.500-4-4.500 5.500 0.500 4.500-3z"/>
</g>
<circle cx="1891.500" cy="356.300" r="1.500" fill="#e6e6e6"/>
<g fill="#e6e6e6"><circle cx="1889" cy="404" r="0.700"/><circle cx="1893" cy="406.500" r="0.700"/><circle cx="1897" cy="404" r="0.700"/><circle cx="1901" cy="406.500" r="0.700"/><circle cx="1905" cy="404" r="0.700"/></g>
</svg>

<div id="status">
<div class="abs" style="left:2px;top:3px;color:#fff;font-size:12px;font-weight:bold">:</div>
<!--STATUSITEMS-->
<div class="abs" style="left:984px;top:3px;width:1px;height:13px;background:#c8c8c8"></div><div class="abs" style="left:1169px;top:3px;width:1px;height:13px;background:#c8c8c8"></div><div class="abs" style="left:1222px;top:3px;width:1px;height:13px;background:#c8c8c8"></div><div class="abs" style="left:1265px;top:3px;width:1px;height:13px;background:#c8c8c8"></div><div class="abs" style="left:1294px;top:3px;width:1px;height:13px;background:#c8c8c8"></div><div class="abs" style="left:1330px;top:3px;width:1px;height:13px;background:#c8c8c8"></div><div class="abs" style="left:1365px;top:3px;width:1px;height:13px;background:#c8c8c8"></div><div class="abs" style="left:1410px;top:3px;width:1px;height:13px;background:#c8c8c8"></div><div class="abs" style="left:1452px;top:3px;width:1px;height:13px;background:#c8c8c8"></div><div class="abs" style="left:1493px;top:3px;width:1px;height:13px;background:#c8c8c8"></div><div class="abs" style="left:1542px;top:3px;width:1px;height:13px;background:#c8c8c8"></div><div class="abs" style="left:1571px;top:3px;width:1px;height:13px;background:#c8c8c8"></div><div class="abs" style="left:1601px;top:3px;width:1px;height:13px;background:#c8c8c8"></div><div class="abs" style="left:1626px;top:3px;width:1px;height:13px;background:#c8c8c8"></div><div class="abs" style="left:1661px;top:3px;width:1px;height:13px;background:#c8c8c8"></div><div class="abs" style="left:1690px;top:3px;width:1px;height:13px;background:#c8c8c8"></div><div class="abs" style="left:1727px;top:3px;width:1px;height:13px;background:#c8c8c8"></div><div class="abs" style="left:1750px;top:3px;width:1px;height:13px;background:#c8c8c8"></div><div class="abs" style="left:1779px;top:3px;width:1px;height:13px;background:#c8c8c8"></div><div class="abs" style="left:1825px;top:3px;width:1px;height:13px;background:#c8c8c8"></div><div class="abs" style="left:1860px;top:3px;width:1px;height:13px;background:#c8c8c8"></div>
<div class="abs st" style="left:1041px;top:3px;height:13px;line-height:13px;color:#fff;white-space:nowrap;font-size:11.5px;letter-spacing:-0.11px">117934.17, 463636.37, 0</div><div class="abs st" style="left:1173px;top:3px;height:13px;line-height:13px;color:#fff;white-space:nowrap;font-size:11.5px;letter-spacing:-0.15px">Standard</div><div class="abs st" style="left:1226px;top:3px;height:13px;line-height:13px;color:#fff;white-space:nowrap;font-size:11.5px;letter-spacing:-0.15px">ISO-25</div><div class="abs st" style="left:1269px;top:3px;height:13px;line-height:13px;color:#fff;white-space:nowrap;font-size:11.5px;letter-spacing:-0.31px">BIM</div><div class="abs st" style="left:1299px;top:3px;height:13px;line-height:13px;color:#66686d;white-space:nowrap;font-size:11.5px;letter-spacing:-1.20px">SNAP</div><div class="abs st" style="left:1336px;top:3px;height:13px;line-height:13px;color:#66686d;white-space:nowrap;font-size:11.5px;letter-spacing:-0.81px">GRID</div><div class="abs st" style="left:1369px;top:3px;height:13px;line-height:13px;color:#66686d;white-space:nowrap;font-size:11.5px;letter-spacing:-0.76px">ORTHO</div><div class="abs st" style="left:1414px;top:3px;height:13px;line-height:13px;color:#66686d;white-space:nowrap;font-size:11.5px;letter-spacing:-0.90px">POLAR</div><div class="abs st" style="left:1456px;top:3px;height:13px;line-height:13px;background:#44474d;color:#fff;white-space:nowrap;font-size:11.5px;letter-spacing:-1.10px">ESNAP</div><div class="abs st" style="left:1497px;top:3px;height:13px;line-height:13px;background:#44474d;color:#fff;white-space:nowrap;font-size:11.5px;letter-spacing:-0.86px">STRACK</div><div class="abs st" style="left:1545px;top:3px;height:13px;line-height:13px;color:#66686d;white-space:nowrap;font-size:11.5px;letter-spacing:-0.64px">LWT</div><div class="abs st" style="left:1575px;top:3px;height:13px;line-height:13px;color:#fff;white-space:nowrap;font-size:11.5px;letter-spacing:-0.45px">TILE</div><div class="abs st" style="left:1606px;top:3px;height:13px;line-height:13px;color:#fff;white-space:nowrap;font-size:11.5px;letter-spacing:0.17px">1:1</div><div class="abs st" style="left:1629px;top:3px;height:13px;line-height:13px;background:#44474d;color:#fff;white-space:nowrap;font-size:11.5px;letter-spacing:-1.02px">DUCS</div><div class="abs st" style="left:1665px;top:3px;height:13px;line-height:13px;background:#44474d;color:#fff;white-space:nowrap;font-size:11.5px;letter-spacing:-0.93px">DYN</div><div class="abs st" style="left:1694px;top:3px;height:13px;line-height:13px;background:#44474d;color:#fff;white-space:nowrap;font-size:11.5px;letter-spacing:-0.93px">QUAD</div><div class="abs st" style="left:1732px;top:3px;height:13px;line-height:13px;background:#44474d;color:#fff;white-space:nowrap;font-size:11.5px;letter-spacing:-0.81px">RT</div><div class="abs st" style="left:1754px;top:3px;height:13px;line-height:13px;background:#44474d;color:#fff;white-space:nowrap;font-size:11.5px;letter-spacing:-0.72px">HKA</div><div class="abs st" style="left:1783px;top:3px;height:13px;line-height:13px;color:#66686d;white-space:nowrap;font-size:11.5px;letter-spacing:-0.72px">LOCKUI</div><div class="abs st" style="left:1829px;top:3px;height:13px;line-height:13px;color:#fff;white-space:nowrap;font-size:11.5px;letter-spacing:-0.25px">None</div>
<svg style="left:1862px;top:0" width="58" height="18" viewBox="0 0 58 18"><path d="M2 7h7l-3.500 4z" fill="#fff"/><g fill="#bbb"><rect x="53" y="8" width="2" height="2"/><rect x="49" y="12" width="2" height="2"/><rect x="53" y="12" width="2" height="2"/><rect x="45" y="15" width="2" height="2"/><rect x="49" y="15" width="2" height="2"/><rect x="53" y="15" width="2" height="2"/></g></svg>
</div>

</body></html>
